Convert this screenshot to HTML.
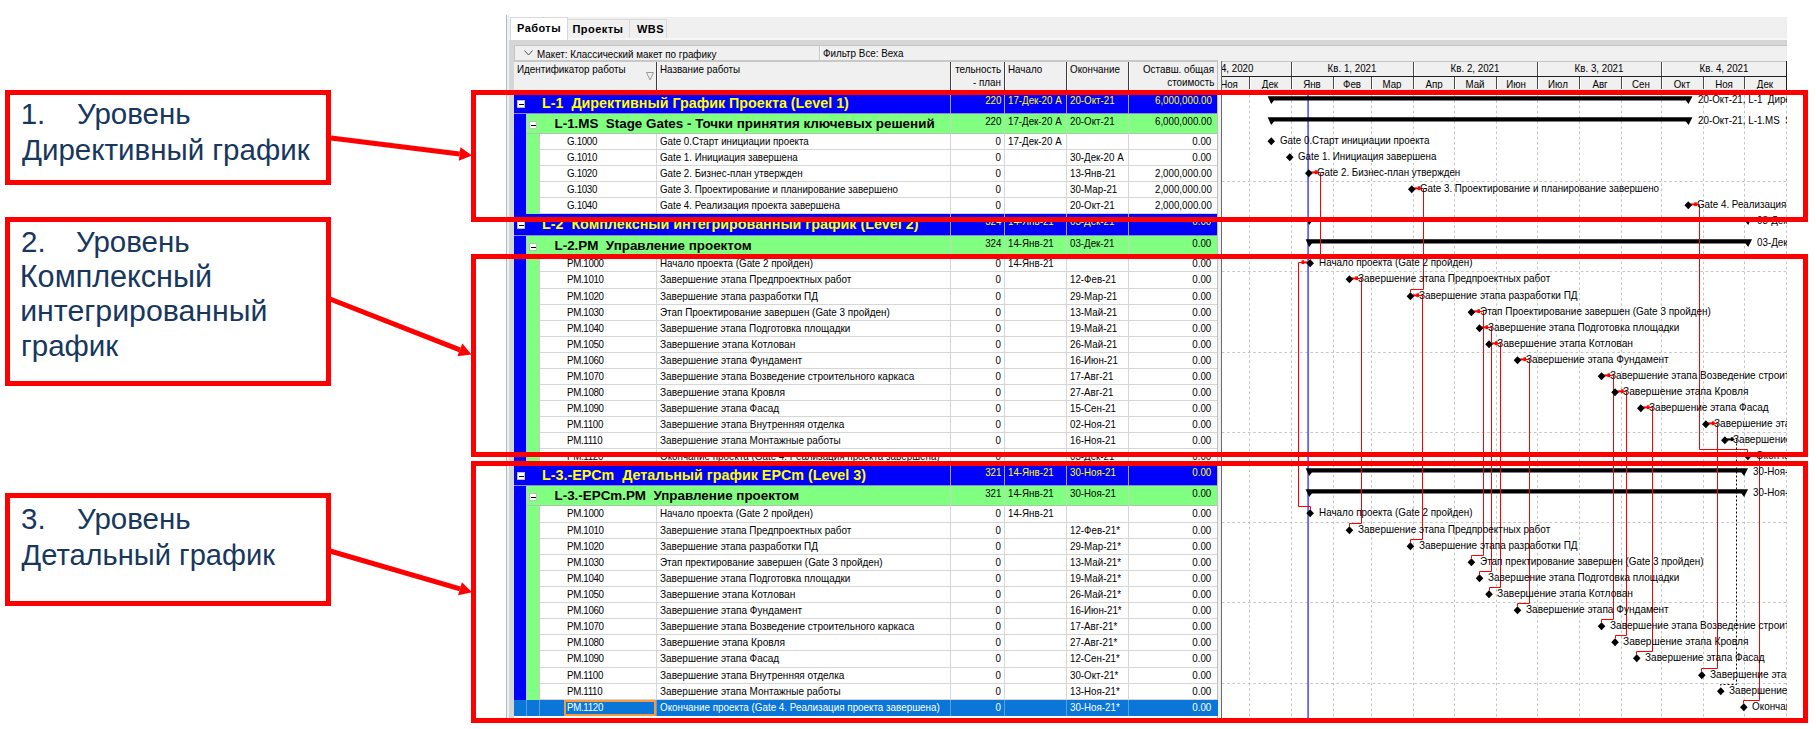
<!DOCTYPE html><html><head><meta charset="utf-8"><style>
html,body{margin:0;padding:0;}body{width:1816px;height:729px;position:relative;overflow:hidden;background:#fff;font-family:"Liberation Sans",sans-serif;}
div{box-sizing:border-box;}
</style></head><body>
<div style="position:absolute;left:506px;top:15px;width:1px;height:703px;background:#B9B9B9"></div>
<div style="position:absolute;left:507px;top:15px;width:2px;height:703px;background:#E9F3FC"></div>
<div style="position:absolute;left:509px;top:17px;width:1278px;height:701px;background:#F0F0F0"></div>
<div style="position:absolute;left:509px;top:38px;width:1278px;height:680px;background:#D6D6D6"></div>
<div style="position:absolute;left:509px;top:38px;width:1278px;height:2px;background:#F7F7F7"></div>
<div style="position:absolute;left:510px;top:17px;width:58px;height:23px;background:#fff;border:1px solid #D9D9D9;border-bottom:none"></div>
<div style="position:absolute;left:568px;top:19px;width:62px;height:19px;background:#F0F0F0;border:1px solid #D9D9D9;border-left:none;border-bottom:none"></div>
<div style="position:absolute;left:630px;top:19px;width:37px;height:19px;background:#F0F0F0;border:1px solid #D9D9D9;border-left:none;border-bottom:none"></div>
<div style="position:absolute;left:517px;top:21.55px;font-size:11.00px;line-height:12.65px;color:#000;font-weight:bold;white-space:pre;letter-spacing:0.45px">Работы</div>
<div style="position:absolute;left:572.5px;top:23.05px;font-size:11.00px;line-height:12.65px;color:#000;font-weight:bold;white-space:pre;letter-spacing:0.45px">Проекты</div>
<div style="position:absolute;left:637px;top:23.05px;font-size:11.00px;line-height:12.65px;color:#000;font-weight:bold;white-space:pre;letter-spacing:0.45px">WBS</div>
<div style="position:absolute;left:514px;top:45px;width:1273px;height:16px;background:#F0F0F0;border-top:1px solid #C4C4C4;border-left:1px solid #C4C4C4"></div>
<div style="position:absolute;left:819px;top:46px;width:1px;height:15px;background:#C8C8C8"></div>
<div style="position:absolute;left:820px;top:46px;width:1px;height:15px;background:#FFFFFF"></div>
<svg style="position:absolute;left:524px;top:50px" width="10" height="7"><path d="M0.5 0.5 L4.5 5 L8.5 0.5" fill="none" stroke="#505050" stroke-width="1"/></svg>
<div style="position:absolute;left:536.5px;top:47.67px;font-size:10.54px;line-height:12.12px;color:#000;font-weight:normal;white-space:pre;transform:scaleX(0.9350);transform-origin:0 0;">Макет: Классический макет по графику</div>
<div style="position:absolute;left:823px;top:47.47px;font-size:10.54px;line-height:12.12px;color:#000;font-weight:normal;white-space:pre;transform:scaleX(0.9350);transform-origin:0 0;">Фильтр Все: Веха</div>
<div style="position:absolute;left:514px;top:60px;width:704px;height:33px;background:#F0F0F0;border-top:2px solid #C8C8C8"></div>
<div style="position:absolute;left:656px;top:62px;width:1px;height:31px;background:#3C3C3C"></div>
<div style="position:absolute;left:657px;top:62px;width:1px;height:31px;background:#FFFFFF"></div>
<div style="position:absolute;left:950px;top:62px;width:1px;height:31px;background:#3C3C3C"></div>
<div style="position:absolute;left:951px;top:62px;width:1px;height:31px;background:#FFFFFF"></div>
<div style="position:absolute;left:1004px;top:62px;width:1px;height:31px;background:#3C3C3C"></div>
<div style="position:absolute;left:1005px;top:62px;width:1px;height:31px;background:#FFFFFF"></div>
<div style="position:absolute;left:1066px;top:62px;width:1px;height:31px;background:#3C3C3C"></div>
<div style="position:absolute;left:1067px;top:62px;width:1px;height:31px;background:#FFFFFF"></div>
<div style="position:absolute;left:1128px;top:62px;width:1px;height:31px;background:#3C3C3C"></div>
<div style="position:absolute;left:1129px;top:62px;width:1px;height:31px;background:#FFFFFF"></div>
<div style="position:absolute;left:1218px;top:62px;width:1px;height:31px;background:#3C3C3C"></div>
<div style="position:absolute;left:1219px;top:62px;width:1px;height:31px;background:#FFFFFF"></div>
<div style="position:absolute;left:517px;top:63.47px;font-size:10.54px;line-height:12.12px;color:#000;font-weight:normal;white-space:pre;transform:scaleX(0.9350);transform-origin:0 0;">Идентификатор работы</div>
<svg style="position:absolute;left:646px;top:72px" width="9" height="9"><path d="M0.5 0.5 L7.5 0.5 L4 8 Z" fill="none" stroke="#9A9A9A" stroke-width="1"/></svg>
<div style="position:absolute;left:660px;top:63.47px;font-size:10.54px;line-height:12.12px;color:#000;font-weight:normal;white-space:pre;transform:scaleX(0.9350);transform-origin:0 0;">Название работы</div>
<div style="position:absolute;right:815px;top:63.27px;font-size:10.54px;line-height:12.12px;color:#000;font-weight:normal;white-space:pre;transform:scaleX(0.9350);transform-origin:100% 0;">тельность</div>
<div style="position:absolute;right:815px;top:75.87px;font-size:10.54px;line-height:12.12px;color:#000;font-weight:normal;white-space:pre;transform:scaleX(0.9350);transform-origin:100% 0;">- план</div>
<div style="position:absolute;left:1008px;top:63.27px;font-size:10.54px;line-height:12.12px;color:#000;font-weight:normal;white-space:pre;transform:scaleX(0.9350);transform-origin:0 0;">Начало</div>
<div style="position:absolute;left:1069.5px;top:63.27px;font-size:10.54px;line-height:12.12px;color:#000;font-weight:normal;white-space:pre;transform:scaleX(0.9350);transform-origin:0 0;">Окончание</div>
<div style="position:absolute;right:602px;top:62.77px;font-size:10.54px;line-height:12.12px;color:#000;font-weight:normal;white-space:pre;transform:scaleX(0.9350);transform-origin:100% 0;">Оставш. общая</div>
<div style="position:absolute;right:602px;top:75.87px;font-size:10.54px;line-height:12.12px;color:#000;font-weight:normal;white-space:pre;transform:scaleX(0.9350);transform-origin:100% 0;">стоимость</div>
<div style="position:absolute;left:514px;top:93px;width:704px;height:625px;background:#FFFFFF"></div>
<div style="position:absolute;left:514px;top:93px;width:12px;height:121px;background:#0000FF"></div>
<div style="position:absolute;left:526px;top:93px;width:1px;height:121px;background:#C8C8D8"></div>
<div style="position:absolute;left:514px;top:214px;width:12px;height:251px;background:#0000FF"></div>
<div style="position:absolute;left:526px;top:214px;width:1px;height:251px;background:#C8C8D8"></div>
<div style="position:absolute;left:514px;top:465px;width:12px;height:251px;background:#0000FF"></div>
<div style="position:absolute;left:526px;top:465px;width:1px;height:251px;background:#C8C8D8"></div>
<div style="position:absolute;left:514px;top:93px;width:704px;height:21px;background:#0000FF"></div>
<div style="position:absolute;left:514px;top:113px;width:704px;height:1px;background:#8C8CC8"></div>
<div style="position:absolute;left:950px;top:93px;width:1px;height:21px;background:#A0A0E8"></div>
<div style="position:absolute;left:1004px;top:93px;width:1px;height:21px;background:#A0A0E8"></div>
<div style="position:absolute;left:1066px;top:93px;width:1px;height:21px;background:#A0A0E8"></div>
<div style="position:absolute;left:1128px;top:93px;width:1px;height:21px;background:#A0A0E8"></div>
<div style="position:absolute;left:517px;top:100px;width:8px;height:8px;background:#fff;border:1px solid #C0C0C0"><div style="position:absolute;left:1px;top:3px;width:5px;height:1px;background:#000"></div></div>
<div style="position:absolute;left:542px;top:94.76px;font-size:14.30px;line-height:16.45px;color:#FFFF00;font-weight:bold;white-space:pre;">L-1  Директивный График Проекта (Level 1)</div>
<div style="position:absolute;right:815px;top:95.16px;font-size:10.43px;line-height:11.99px;color:#FFFF00;font-weight:normal;white-space:pre;transform:scaleX(0.9350);transform-origin:100% 0;">220</div>
<div style="position:absolute;left:1008px;top:95.16px;font-size:10.43px;line-height:11.99px;color:#FFFF00;font-weight:normal;white-space:pre;transform:scaleX(0.9350);transform-origin:0 0;">17-Дек-20 A</div>
<div style="position:absolute;left:1069.5px;top:95.16px;font-size:10.43px;line-height:11.99px;color:#FFFF00;font-weight:normal;white-space:pre;transform:scaleX(0.9350);transform-origin:0 0;">20-Окт-21</div>
<div style="position:absolute;right:604.5px;top:95.16px;font-size:10.43px;line-height:11.99px;color:#FFFF00;font-weight:normal;white-space:pre;transform:scaleX(0.9350);transform-origin:100% 0;">6,000,000.00</div>
<div style="position:absolute;left:527px;top:114px;width:691px;height:20px;background:#80FF80"></div>
<div style="position:absolute;left:527px;top:133px;width:691px;height:1px;background:#A8C8A8"></div>
<div style="position:absolute;left:950px;top:114px;width:1px;height:20px;background:#C0D8C0"></div>
<div style="position:absolute;left:1004px;top:114px;width:1px;height:20px;background:#C0D8C0"></div>
<div style="position:absolute;left:1066px;top:114px;width:1px;height:20px;background:#C0D8C0"></div>
<div style="position:absolute;left:1128px;top:114px;width:1px;height:20px;background:#C0D8C0"></div>
<div style="position:absolute;left:529px;top:121px;width:8px;height:8px;background:#fff;border:1px solid #C0C0C0"><div style="position:absolute;left:1px;top:3px;width:5px;height:1px;background:#000"></div></div>
<div style="position:absolute;left:554.5px;top:116.07px;font-size:13.40px;line-height:15.41px;color:#000;font-weight:bold;white-space:pre;">L-1.MS  Stage Gates - Точки принятия ключевых решений</div>
<div style="position:absolute;right:815px;top:115.56px;font-size:10.43px;line-height:11.99px;color:#000;font-weight:normal;white-space:pre;transform:scaleX(0.9350);transform-origin:100% 0;">220</div>
<div style="position:absolute;left:1008px;top:115.56px;font-size:10.43px;line-height:11.99px;color:#000;font-weight:normal;white-space:pre;transform:scaleX(0.9350);transform-origin:0 0;">17-Дек-20 A</div>
<div style="position:absolute;left:1069.5px;top:115.56px;font-size:10.43px;line-height:11.99px;color:#000;font-weight:normal;white-space:pre;transform:scaleX(0.9350);transform-origin:0 0;">20-Окт-21</div>
<div style="position:absolute;right:604.5px;top:115.56px;font-size:10.43px;line-height:11.99px;color:#000;font-weight:normal;white-space:pre;transform:scaleX(0.9350);transform-origin:100% 0;">6,000,000.00</div>
<div style="position:absolute;left:527px;top:134px;width:12px;height:16px;background:#80FF80"></div>
<div style="position:absolute;left:539px;top:134px;width:1px;height:16px;background:#C8C8C8"></div>
<div style="position:absolute;left:540px;top:149px;width:678px;height:1px;background:#D6D6D6"></div>
<div style="position:absolute;left:656px;top:134px;width:1px;height:16px;background:#D6D6D6"></div>
<div style="position:absolute;left:950px;top:134px;width:1px;height:16px;background:#D6D6D6"></div>
<div style="position:absolute;left:1004px;top:134px;width:1px;height:16px;background:#D6D6D6"></div>
<div style="position:absolute;left:1066px;top:134px;width:1px;height:16px;background:#D6D6D6"></div>
<div style="position:absolute;left:1128px;top:134px;width:1px;height:16px;background:#D6D6D6"></div>
<div style="position:absolute;left:567px;top:135.56px;font-size:10.43px;line-height:11.99px;color:#000;font-weight:normal;white-space:pre;transform:scaleX(0.9350);transform-origin:0 0;letter-spacing:-0.35px">G.1000</div>
<div style="position:absolute;left:660px;top:135.56px;font-size:10.43px;line-height:11.99px;color:#000;font-weight:normal;white-space:pre;transform:scaleX(0.9350);transform-origin:0 0;">Gate 0.Старт инициации проекта</div>
<div style="position:absolute;right:815px;top:135.56px;font-size:10.43px;line-height:11.99px;color:#000;font-weight:normal;white-space:pre;transform:scaleX(0.9350);transform-origin:100% 0;">0</div>
<div style="position:absolute;left:1008px;top:135.56px;font-size:10.43px;line-height:11.99px;color:#000;font-weight:normal;white-space:pre;transform:scaleX(0.9350);transform-origin:0 0;">17-Дек-20 A</div>
<div style="position:absolute;right:604.5px;top:135.56px;font-size:10.43px;line-height:11.99px;color:#000;font-weight:normal;white-space:pre;transform:scaleX(0.9350);transform-origin:100% 0;">0.00</div>
<div style="position:absolute;left:527px;top:150px;width:12px;height:16px;background:#80FF80"></div>
<div style="position:absolute;left:539px;top:150px;width:1px;height:16px;background:#C8C8C8"></div>
<div style="position:absolute;left:540px;top:165px;width:678px;height:1px;background:#D6D6D6"></div>
<div style="position:absolute;left:656px;top:150px;width:1px;height:16px;background:#D6D6D6"></div>
<div style="position:absolute;left:950px;top:150px;width:1px;height:16px;background:#D6D6D6"></div>
<div style="position:absolute;left:1004px;top:150px;width:1px;height:16px;background:#D6D6D6"></div>
<div style="position:absolute;left:1066px;top:150px;width:1px;height:16px;background:#D6D6D6"></div>
<div style="position:absolute;left:1128px;top:150px;width:1px;height:16px;background:#D6D6D6"></div>
<div style="position:absolute;left:567px;top:151.56px;font-size:10.43px;line-height:11.99px;color:#000;font-weight:normal;white-space:pre;transform:scaleX(0.9350);transform-origin:0 0;letter-spacing:-0.35px">G.1010</div>
<div style="position:absolute;left:660px;top:151.56px;font-size:10.43px;line-height:11.99px;color:#000;font-weight:normal;white-space:pre;transform:scaleX(0.9350);transform-origin:0 0;">Gate 1. Инициация завершена</div>
<div style="position:absolute;right:815px;top:151.56px;font-size:10.43px;line-height:11.99px;color:#000;font-weight:normal;white-space:pre;transform:scaleX(0.9350);transform-origin:100% 0;">0</div>
<div style="position:absolute;left:1069.5px;top:151.56px;font-size:10.43px;line-height:11.99px;color:#000;font-weight:normal;white-space:pre;transform:scaleX(0.9350);transform-origin:0 0;">30-Дек-20 A</div>
<div style="position:absolute;right:604.5px;top:151.56px;font-size:10.43px;line-height:11.99px;color:#000;font-weight:normal;white-space:pre;transform:scaleX(0.9350);transform-origin:100% 0;">0.00</div>
<div style="position:absolute;left:527px;top:166px;width:12px;height:16px;background:#80FF80"></div>
<div style="position:absolute;left:539px;top:166px;width:1px;height:16px;background:#C8C8C8"></div>
<div style="position:absolute;left:540px;top:181px;width:678px;height:1px;background:#D6D6D6"></div>
<div style="position:absolute;left:656px;top:166px;width:1px;height:16px;background:#D6D6D6"></div>
<div style="position:absolute;left:950px;top:166px;width:1px;height:16px;background:#D6D6D6"></div>
<div style="position:absolute;left:1004px;top:166px;width:1px;height:16px;background:#D6D6D6"></div>
<div style="position:absolute;left:1066px;top:166px;width:1px;height:16px;background:#D6D6D6"></div>
<div style="position:absolute;left:1128px;top:166px;width:1px;height:16px;background:#D6D6D6"></div>
<div style="position:absolute;left:567px;top:167.56px;font-size:10.43px;line-height:11.99px;color:#000;font-weight:normal;white-space:pre;transform:scaleX(0.9350);transform-origin:0 0;letter-spacing:-0.35px">G.1020</div>
<div style="position:absolute;left:660px;top:167.56px;font-size:10.43px;line-height:11.99px;color:#000;font-weight:normal;white-space:pre;transform:scaleX(0.9350);transform-origin:0 0;">Gate 2. Бизнес-план утвержден</div>
<div style="position:absolute;right:815px;top:167.56px;font-size:10.43px;line-height:11.99px;color:#000;font-weight:normal;white-space:pre;transform:scaleX(0.9350);transform-origin:100% 0;">0</div>
<div style="position:absolute;left:1069.5px;top:167.56px;font-size:10.43px;line-height:11.99px;color:#000;font-weight:normal;white-space:pre;transform:scaleX(0.9350);transform-origin:0 0;">13-Янв-21</div>
<div style="position:absolute;right:604.5px;top:167.56px;font-size:10.43px;line-height:11.99px;color:#000;font-weight:normal;white-space:pre;transform:scaleX(0.9350);transform-origin:100% 0;">2,000,000.00</div>
<div style="position:absolute;left:527px;top:182px;width:12px;height:16px;background:#80FF80"></div>
<div style="position:absolute;left:539px;top:182px;width:1px;height:16px;background:#C8C8C8"></div>
<div style="position:absolute;left:540px;top:197px;width:678px;height:1px;background:#D6D6D6"></div>
<div style="position:absolute;left:656px;top:182px;width:1px;height:16px;background:#D6D6D6"></div>
<div style="position:absolute;left:950px;top:182px;width:1px;height:16px;background:#D6D6D6"></div>
<div style="position:absolute;left:1004px;top:182px;width:1px;height:16px;background:#D6D6D6"></div>
<div style="position:absolute;left:1066px;top:182px;width:1px;height:16px;background:#D6D6D6"></div>
<div style="position:absolute;left:1128px;top:182px;width:1px;height:16px;background:#D6D6D6"></div>
<div style="position:absolute;left:567px;top:183.56px;font-size:10.43px;line-height:11.99px;color:#000;font-weight:normal;white-space:pre;transform:scaleX(0.9350);transform-origin:0 0;letter-spacing:-0.35px">G.1030</div>
<div style="position:absolute;left:660px;top:183.56px;font-size:10.43px;line-height:11.99px;color:#000;font-weight:normal;white-space:pre;transform:scaleX(0.9350);transform-origin:0 0;">Gate 3. Проектирование и планирование завершено</div>
<div style="position:absolute;right:815px;top:183.56px;font-size:10.43px;line-height:11.99px;color:#000;font-weight:normal;white-space:pre;transform:scaleX(0.9350);transform-origin:100% 0;">0</div>
<div style="position:absolute;left:1069.5px;top:183.56px;font-size:10.43px;line-height:11.99px;color:#000;font-weight:normal;white-space:pre;transform:scaleX(0.9350);transform-origin:0 0;">30-Мар-21</div>
<div style="position:absolute;right:604.5px;top:183.56px;font-size:10.43px;line-height:11.99px;color:#000;font-weight:normal;white-space:pre;transform:scaleX(0.9350);transform-origin:100% 0;">2,000,000.00</div>
<div style="position:absolute;left:527px;top:198px;width:12px;height:16px;background:#80FF80"></div>
<div style="position:absolute;left:539px;top:198px;width:1px;height:16px;background:#C8C8C8"></div>
<div style="position:absolute;left:540px;top:213px;width:678px;height:1px;background:#D6D6D6"></div>
<div style="position:absolute;left:656px;top:198px;width:1px;height:16px;background:#D6D6D6"></div>
<div style="position:absolute;left:950px;top:198px;width:1px;height:16px;background:#D6D6D6"></div>
<div style="position:absolute;left:1004px;top:198px;width:1px;height:16px;background:#D6D6D6"></div>
<div style="position:absolute;left:1066px;top:198px;width:1px;height:16px;background:#D6D6D6"></div>
<div style="position:absolute;left:1128px;top:198px;width:1px;height:16px;background:#D6D6D6"></div>
<div style="position:absolute;left:567px;top:199.56px;font-size:10.43px;line-height:11.99px;color:#000;font-weight:normal;white-space:pre;transform:scaleX(0.9350);transform-origin:0 0;letter-spacing:-0.35px">G.1040</div>
<div style="position:absolute;left:660px;top:199.56px;font-size:10.43px;line-height:11.99px;color:#000;font-weight:normal;white-space:pre;transform:scaleX(0.9350);transform-origin:0 0;">Gate 4. Реализация проекта завершена</div>
<div style="position:absolute;right:815px;top:199.56px;font-size:10.43px;line-height:11.99px;color:#000;font-weight:normal;white-space:pre;transform:scaleX(0.9350);transform-origin:100% 0;">0</div>
<div style="position:absolute;left:1069.5px;top:199.56px;font-size:10.43px;line-height:11.99px;color:#000;font-weight:normal;white-space:pre;transform:scaleX(0.9350);transform-origin:0 0;">20-Окт-21</div>
<div style="position:absolute;right:604.5px;top:199.56px;font-size:10.43px;line-height:11.99px;color:#000;font-weight:normal;white-space:pre;transform:scaleX(0.9350);transform-origin:100% 0;">2,000,000.00</div>
<div style="position:absolute;left:514px;top:214px;width:704px;height:22px;background:#0000FF"></div>
<div style="position:absolute;left:514px;top:235px;width:704px;height:1px;background:#8C8CC8"></div>
<div style="position:absolute;left:950px;top:214px;width:1px;height:22px;background:#A0A0E8"></div>
<div style="position:absolute;left:1004px;top:214px;width:1px;height:22px;background:#A0A0E8"></div>
<div style="position:absolute;left:1066px;top:214px;width:1px;height:22px;background:#A0A0E8"></div>
<div style="position:absolute;left:1128px;top:214px;width:1px;height:22px;background:#A0A0E8"></div>
<div style="position:absolute;left:517px;top:221px;width:8px;height:8px;background:#fff;border:1px solid #C0C0C0"><div style="position:absolute;left:1px;top:3px;width:5px;height:1px;background:#000"></div></div>
<div style="position:absolute;left:542px;top:215.76px;font-size:14.30px;line-height:16.45px;color:#FFFF00;font-weight:bold;white-space:pre;">L-2  Комплексный интегрированный график (Level 2)</div>
<div style="position:absolute;right:815px;top:216.16px;font-size:10.43px;line-height:11.99px;color:#FFFF00;font-weight:normal;white-space:pre;transform:scaleX(0.9350);transform-origin:100% 0;">324</div>
<div style="position:absolute;left:1008px;top:216.16px;font-size:10.43px;line-height:11.99px;color:#FFFF00;font-weight:normal;white-space:pre;transform:scaleX(0.9350);transform-origin:0 0;">14-Янв-21</div>
<div style="position:absolute;left:1069.5px;top:216.16px;font-size:10.43px;line-height:11.99px;color:#FFFF00;font-weight:normal;white-space:pre;transform:scaleX(0.9350);transform-origin:0 0;">03-Дек-21</div>
<div style="position:absolute;right:604.5px;top:216.16px;font-size:10.43px;line-height:11.99px;color:#FFFF00;font-weight:normal;white-space:pre;transform:scaleX(0.9350);transform-origin:100% 0;">0.00</div>
<div style="position:absolute;left:527px;top:236px;width:691px;height:20px;background:#80FF80"></div>
<div style="position:absolute;left:527px;top:255px;width:691px;height:1px;background:#A8C8A8"></div>
<div style="position:absolute;left:950px;top:236px;width:1px;height:20px;background:#C0D8C0"></div>
<div style="position:absolute;left:1004px;top:236px;width:1px;height:20px;background:#C0D8C0"></div>
<div style="position:absolute;left:1066px;top:236px;width:1px;height:20px;background:#C0D8C0"></div>
<div style="position:absolute;left:1128px;top:236px;width:1px;height:20px;background:#C0D8C0"></div>
<div style="position:absolute;left:529px;top:243px;width:8px;height:8px;background:#fff;border:1px solid #C0C0C0"><div style="position:absolute;left:1px;top:3px;width:5px;height:1px;background:#000"></div></div>
<div style="position:absolute;left:554.5px;top:238.07px;font-size:13.40px;line-height:15.41px;color:#000;font-weight:bold;white-space:pre;">L-2.PM  Управление проектом</div>
<div style="position:absolute;right:815px;top:237.56px;font-size:10.43px;line-height:11.99px;color:#000;font-weight:normal;white-space:pre;transform:scaleX(0.9350);transform-origin:100% 0;">324</div>
<div style="position:absolute;left:1008px;top:237.56px;font-size:10.43px;line-height:11.99px;color:#000;font-weight:normal;white-space:pre;transform:scaleX(0.9350);transform-origin:0 0;">14-Янв-21</div>
<div style="position:absolute;left:1069.5px;top:237.56px;font-size:10.43px;line-height:11.99px;color:#000;font-weight:normal;white-space:pre;transform:scaleX(0.9350);transform-origin:0 0;">03-Дек-21</div>
<div style="position:absolute;right:604.5px;top:237.56px;font-size:10.43px;line-height:11.99px;color:#000;font-weight:normal;white-space:pre;transform:scaleX(0.9350);transform-origin:100% 0;">0.00</div>
<div style="position:absolute;left:527px;top:256px;width:12px;height:16px;background:#80FF80"></div>
<div style="position:absolute;left:539px;top:256px;width:1px;height:16px;background:#C8C8C8"></div>
<div style="position:absolute;left:540px;top:271px;width:678px;height:1px;background:#D6D6D6"></div>
<div style="position:absolute;left:656px;top:256px;width:1px;height:16px;background:#D6D6D6"></div>
<div style="position:absolute;left:950px;top:256px;width:1px;height:16px;background:#D6D6D6"></div>
<div style="position:absolute;left:1004px;top:256px;width:1px;height:16px;background:#D6D6D6"></div>
<div style="position:absolute;left:1066px;top:256px;width:1px;height:16px;background:#D6D6D6"></div>
<div style="position:absolute;left:1128px;top:256px;width:1px;height:16px;background:#D6D6D6"></div>
<div style="position:absolute;left:567px;top:257.56px;font-size:10.43px;line-height:11.99px;color:#000;font-weight:normal;white-space:pre;transform:scaleX(0.9350);transform-origin:0 0;letter-spacing:-0.35px">PM.1000</div>
<div style="position:absolute;left:660px;top:257.56px;font-size:10.43px;line-height:11.99px;color:#000;font-weight:normal;white-space:pre;transform:scaleX(0.9434);transform-origin:0 0;">Начало проекта (Gate 2 пройден)</div>
<div style="position:absolute;right:815px;top:257.56px;font-size:10.43px;line-height:11.99px;color:#000;font-weight:normal;white-space:pre;transform:scaleX(0.9350);transform-origin:100% 0;">0</div>
<div style="position:absolute;left:1008px;top:257.56px;font-size:10.43px;line-height:11.99px;color:#000;font-weight:normal;white-space:pre;transform:scaleX(0.9350);transform-origin:0 0;">14-Янв-21</div>
<div style="position:absolute;right:604.5px;top:257.56px;font-size:10.43px;line-height:11.99px;color:#000;font-weight:normal;white-space:pre;transform:scaleX(0.9350);transform-origin:100% 0;">0.00</div>
<div style="position:absolute;left:527px;top:272px;width:12px;height:17px;background:#80FF80"></div>
<div style="position:absolute;left:539px;top:272px;width:1px;height:17px;background:#C8C8C8"></div>
<div style="position:absolute;left:540px;top:288px;width:678px;height:1px;background:#D6D6D6"></div>
<div style="position:absolute;left:656px;top:272px;width:1px;height:17px;background:#D6D6D6"></div>
<div style="position:absolute;left:950px;top:272px;width:1px;height:17px;background:#D6D6D6"></div>
<div style="position:absolute;left:1004px;top:272px;width:1px;height:17px;background:#D6D6D6"></div>
<div style="position:absolute;left:1066px;top:272px;width:1px;height:17px;background:#D6D6D6"></div>
<div style="position:absolute;left:1128px;top:272px;width:1px;height:17px;background:#D6D6D6"></div>
<div style="position:absolute;left:567px;top:273.56px;font-size:10.43px;line-height:11.99px;color:#000;font-weight:normal;white-space:pre;transform:scaleX(0.9350);transform-origin:0 0;letter-spacing:-0.35px">PM.1010</div>
<div style="position:absolute;left:660px;top:273.56px;font-size:10.43px;line-height:11.99px;color:#000;font-weight:normal;white-space:pre;transform:scaleX(0.9565);transform-origin:0 0;">Завершение этапа Предпроектных работ</div>
<div style="position:absolute;right:815px;top:273.56px;font-size:10.43px;line-height:11.99px;color:#000;font-weight:normal;white-space:pre;transform:scaleX(0.9350);transform-origin:100% 0;">0</div>
<div style="position:absolute;left:1069.5px;top:273.56px;font-size:10.43px;line-height:11.99px;color:#000;font-weight:normal;white-space:pre;transform:scaleX(0.9350);transform-origin:0 0;">12-Фев-21</div>
<div style="position:absolute;right:604.5px;top:273.56px;font-size:10.43px;line-height:11.99px;color:#000;font-weight:normal;white-space:pre;transform:scaleX(0.9350);transform-origin:100% 0;">0.00</div>
<div style="position:absolute;left:527px;top:289px;width:12px;height:16px;background:#80FF80"></div>
<div style="position:absolute;left:539px;top:289px;width:1px;height:16px;background:#C8C8C8"></div>
<div style="position:absolute;left:540px;top:304px;width:678px;height:1px;background:#D6D6D6"></div>
<div style="position:absolute;left:656px;top:289px;width:1px;height:16px;background:#D6D6D6"></div>
<div style="position:absolute;left:950px;top:289px;width:1px;height:16px;background:#D6D6D6"></div>
<div style="position:absolute;left:1004px;top:289px;width:1px;height:16px;background:#D6D6D6"></div>
<div style="position:absolute;left:1066px;top:289px;width:1px;height:16px;background:#D6D6D6"></div>
<div style="position:absolute;left:1128px;top:289px;width:1px;height:16px;background:#D6D6D6"></div>
<div style="position:absolute;left:567px;top:290.56px;font-size:10.43px;line-height:11.99px;color:#000;font-weight:normal;white-space:pre;transform:scaleX(0.9350);transform-origin:0 0;letter-spacing:-0.35px">PM.1020</div>
<div style="position:absolute;left:660px;top:290.56px;font-size:10.43px;line-height:11.99px;color:#000;font-weight:normal;white-space:pre;transform:scaleX(0.9546);transform-origin:0 0;">Завершение этапа разработки ПД</div>
<div style="position:absolute;right:815px;top:290.56px;font-size:10.43px;line-height:11.99px;color:#000;font-weight:normal;white-space:pre;transform:scaleX(0.9350);transform-origin:100% 0;">0</div>
<div style="position:absolute;left:1069.5px;top:290.56px;font-size:10.43px;line-height:11.99px;color:#000;font-weight:normal;white-space:pre;transform:scaleX(0.9350);transform-origin:0 0;">29-Мар-21</div>
<div style="position:absolute;right:604.5px;top:290.56px;font-size:10.43px;line-height:11.99px;color:#000;font-weight:normal;white-space:pre;transform:scaleX(0.9350);transform-origin:100% 0;">0.00</div>
<div style="position:absolute;left:527px;top:305px;width:12px;height:16px;background:#80FF80"></div>
<div style="position:absolute;left:539px;top:305px;width:1px;height:16px;background:#C8C8C8"></div>
<div style="position:absolute;left:540px;top:320px;width:678px;height:1px;background:#D6D6D6"></div>
<div style="position:absolute;left:656px;top:305px;width:1px;height:16px;background:#D6D6D6"></div>
<div style="position:absolute;left:950px;top:305px;width:1px;height:16px;background:#D6D6D6"></div>
<div style="position:absolute;left:1004px;top:305px;width:1px;height:16px;background:#D6D6D6"></div>
<div style="position:absolute;left:1066px;top:305px;width:1px;height:16px;background:#D6D6D6"></div>
<div style="position:absolute;left:1128px;top:305px;width:1px;height:16px;background:#D6D6D6"></div>
<div style="position:absolute;left:567px;top:306.56px;font-size:10.43px;line-height:11.99px;color:#000;font-weight:normal;white-space:pre;transform:scaleX(0.9350);transform-origin:0 0;letter-spacing:-0.35px">PM.1030</div>
<div style="position:absolute;left:660px;top:306.56px;font-size:10.43px;line-height:11.99px;color:#000;font-weight:normal;white-space:pre;transform:scaleX(0.9500);transform-origin:0 0;">Этап Проектирование завершен (Gate 3 пройден)</div>
<div style="position:absolute;right:815px;top:306.56px;font-size:10.43px;line-height:11.99px;color:#000;font-weight:normal;white-space:pre;transform:scaleX(0.9350);transform-origin:100% 0;">0</div>
<div style="position:absolute;left:1069.5px;top:306.56px;font-size:10.43px;line-height:11.99px;color:#000;font-weight:normal;white-space:pre;transform:scaleX(0.9350);transform-origin:0 0;">13-Май-21</div>
<div style="position:absolute;right:604.5px;top:306.56px;font-size:10.43px;line-height:11.99px;color:#000;font-weight:normal;white-space:pre;transform:scaleX(0.9350);transform-origin:100% 0;">0.00</div>
<div style="position:absolute;left:527px;top:321px;width:12px;height:16px;background:#80FF80"></div>
<div style="position:absolute;left:539px;top:321px;width:1px;height:16px;background:#C8C8C8"></div>
<div style="position:absolute;left:540px;top:336px;width:678px;height:1px;background:#D6D6D6"></div>
<div style="position:absolute;left:656px;top:321px;width:1px;height:16px;background:#D6D6D6"></div>
<div style="position:absolute;left:950px;top:321px;width:1px;height:16px;background:#D6D6D6"></div>
<div style="position:absolute;left:1004px;top:321px;width:1px;height:16px;background:#D6D6D6"></div>
<div style="position:absolute;left:1066px;top:321px;width:1px;height:16px;background:#D6D6D6"></div>
<div style="position:absolute;left:1128px;top:321px;width:1px;height:16px;background:#D6D6D6"></div>
<div style="position:absolute;left:567px;top:322.56px;font-size:10.43px;line-height:11.99px;color:#000;font-weight:normal;white-space:pre;transform:scaleX(0.9350);transform-origin:0 0;letter-spacing:-0.35px">PM.1040</div>
<div style="position:absolute;left:660px;top:322.56px;font-size:10.43px;line-height:11.99px;color:#000;font-weight:normal;white-space:pre;transform:scaleX(0.9537);transform-origin:0 0;">Завершение этапа Подготовка площадки</div>
<div style="position:absolute;right:815px;top:322.56px;font-size:10.43px;line-height:11.99px;color:#000;font-weight:normal;white-space:pre;transform:scaleX(0.9350);transform-origin:100% 0;">0</div>
<div style="position:absolute;left:1069.5px;top:322.56px;font-size:10.43px;line-height:11.99px;color:#000;font-weight:normal;white-space:pre;transform:scaleX(0.9350);transform-origin:0 0;">19-Май-21</div>
<div style="position:absolute;right:604.5px;top:322.56px;font-size:10.43px;line-height:11.99px;color:#000;font-weight:normal;white-space:pre;transform:scaleX(0.9350);transform-origin:100% 0;">0.00</div>
<div style="position:absolute;left:527px;top:337px;width:12px;height:16px;background:#80FF80"></div>
<div style="position:absolute;left:539px;top:337px;width:1px;height:16px;background:#C8C8C8"></div>
<div style="position:absolute;left:540px;top:352px;width:678px;height:1px;background:#D6D6D6"></div>
<div style="position:absolute;left:656px;top:337px;width:1px;height:16px;background:#D6D6D6"></div>
<div style="position:absolute;left:950px;top:337px;width:1px;height:16px;background:#D6D6D6"></div>
<div style="position:absolute;left:1004px;top:337px;width:1px;height:16px;background:#D6D6D6"></div>
<div style="position:absolute;left:1066px;top:337px;width:1px;height:16px;background:#D6D6D6"></div>
<div style="position:absolute;left:1128px;top:337px;width:1px;height:16px;background:#D6D6D6"></div>
<div style="position:absolute;left:567px;top:338.56px;font-size:10.43px;line-height:11.99px;color:#000;font-weight:normal;white-space:pre;transform:scaleX(0.9350);transform-origin:0 0;letter-spacing:-0.35px">PM.1050</div>
<div style="position:absolute;left:660px;top:338.56px;font-size:10.43px;line-height:11.99px;color:#000;font-weight:normal;white-space:pre;transform:scaleX(0.9771);transform-origin:0 0;">Завершение этапа Котлован</div>
<div style="position:absolute;right:815px;top:338.56px;font-size:10.43px;line-height:11.99px;color:#000;font-weight:normal;white-space:pre;transform:scaleX(0.9350);transform-origin:100% 0;">0</div>
<div style="position:absolute;left:1069.5px;top:338.56px;font-size:10.43px;line-height:11.99px;color:#000;font-weight:normal;white-space:pre;transform:scaleX(0.9350);transform-origin:0 0;">26-Май-21</div>
<div style="position:absolute;right:604.5px;top:338.56px;font-size:10.43px;line-height:11.99px;color:#000;font-weight:normal;white-space:pre;transform:scaleX(0.9350);transform-origin:100% 0;">0.00</div>
<div style="position:absolute;left:527px;top:353px;width:12px;height:16px;background:#80FF80"></div>
<div style="position:absolute;left:539px;top:353px;width:1px;height:16px;background:#C8C8C8"></div>
<div style="position:absolute;left:540px;top:368px;width:678px;height:1px;background:#D6D6D6"></div>
<div style="position:absolute;left:656px;top:353px;width:1px;height:16px;background:#D6D6D6"></div>
<div style="position:absolute;left:950px;top:353px;width:1px;height:16px;background:#D6D6D6"></div>
<div style="position:absolute;left:1004px;top:353px;width:1px;height:16px;background:#D6D6D6"></div>
<div style="position:absolute;left:1066px;top:353px;width:1px;height:16px;background:#D6D6D6"></div>
<div style="position:absolute;left:1128px;top:353px;width:1px;height:16px;background:#D6D6D6"></div>
<div style="position:absolute;left:567px;top:354.56px;font-size:10.43px;line-height:11.99px;color:#000;font-weight:normal;white-space:pre;transform:scaleX(0.9350);transform-origin:0 0;letter-spacing:-0.35px">PM.1060</div>
<div style="position:absolute;left:660px;top:354.56px;font-size:10.43px;line-height:11.99px;color:#000;font-weight:normal;white-space:pre;transform:scaleX(0.9621);transform-origin:0 0;">Завершение этапа Фундамент</div>
<div style="position:absolute;right:815px;top:354.56px;font-size:10.43px;line-height:11.99px;color:#000;font-weight:normal;white-space:pre;transform:scaleX(0.9350);transform-origin:100% 0;">0</div>
<div style="position:absolute;left:1069.5px;top:354.56px;font-size:10.43px;line-height:11.99px;color:#000;font-weight:normal;white-space:pre;transform:scaleX(0.9350);transform-origin:0 0;">16-Июн-21</div>
<div style="position:absolute;right:604.5px;top:354.56px;font-size:10.43px;line-height:11.99px;color:#000;font-weight:normal;white-space:pre;transform:scaleX(0.9350);transform-origin:100% 0;">0.00</div>
<div style="position:absolute;left:527px;top:369px;width:12px;height:16px;background:#80FF80"></div>
<div style="position:absolute;left:539px;top:369px;width:1px;height:16px;background:#C8C8C8"></div>
<div style="position:absolute;left:540px;top:384px;width:678px;height:1px;background:#D6D6D6"></div>
<div style="position:absolute;left:656px;top:369px;width:1px;height:16px;background:#D6D6D6"></div>
<div style="position:absolute;left:950px;top:369px;width:1px;height:16px;background:#D6D6D6"></div>
<div style="position:absolute;left:1004px;top:369px;width:1px;height:16px;background:#D6D6D6"></div>
<div style="position:absolute;left:1066px;top:369px;width:1px;height:16px;background:#D6D6D6"></div>
<div style="position:absolute;left:1128px;top:369px;width:1px;height:16px;background:#D6D6D6"></div>
<div style="position:absolute;left:567px;top:370.56px;font-size:10.43px;line-height:11.99px;color:#000;font-weight:normal;white-space:pre;transform:scaleX(0.9350);transform-origin:0 0;letter-spacing:-0.35px">PM.1070</div>
<div style="position:absolute;left:660px;top:370.56px;font-size:10.43px;line-height:11.99px;color:#000;font-weight:normal;white-space:pre;transform:scaleX(0.9602);transform-origin:0 0;">Завершение этапа Возведение строительного каркаса</div>
<div style="position:absolute;right:815px;top:370.56px;font-size:10.43px;line-height:11.99px;color:#000;font-weight:normal;white-space:pre;transform:scaleX(0.9350);transform-origin:100% 0;">0</div>
<div style="position:absolute;left:1069.5px;top:370.56px;font-size:10.43px;line-height:11.99px;color:#000;font-weight:normal;white-space:pre;transform:scaleX(0.9350);transform-origin:0 0;">17-Авг-21</div>
<div style="position:absolute;right:604.5px;top:370.56px;font-size:10.43px;line-height:11.99px;color:#000;font-weight:normal;white-space:pre;transform:scaleX(0.9350);transform-origin:100% 0;">0.00</div>
<div style="position:absolute;left:527px;top:385px;width:12px;height:16px;background:#80FF80"></div>
<div style="position:absolute;left:539px;top:385px;width:1px;height:16px;background:#C8C8C8"></div>
<div style="position:absolute;left:540px;top:400px;width:678px;height:1px;background:#D6D6D6"></div>
<div style="position:absolute;left:656px;top:385px;width:1px;height:16px;background:#D6D6D6"></div>
<div style="position:absolute;left:950px;top:385px;width:1px;height:16px;background:#D6D6D6"></div>
<div style="position:absolute;left:1004px;top:385px;width:1px;height:16px;background:#D6D6D6"></div>
<div style="position:absolute;left:1066px;top:385px;width:1px;height:16px;background:#D6D6D6"></div>
<div style="position:absolute;left:1128px;top:385px;width:1px;height:16px;background:#D6D6D6"></div>
<div style="position:absolute;left:567px;top:386.56px;font-size:10.43px;line-height:11.99px;color:#000;font-weight:normal;white-space:pre;transform:scaleX(0.9350);transform-origin:0 0;letter-spacing:-0.35px">PM.1080</div>
<div style="position:absolute;left:660px;top:386.56px;font-size:10.43px;line-height:11.99px;color:#000;font-weight:normal;white-space:pre;transform:scaleX(0.9752);transform-origin:0 0;">Завершение этапа Кровля</div>
<div style="position:absolute;right:815px;top:386.56px;font-size:10.43px;line-height:11.99px;color:#000;font-weight:normal;white-space:pre;transform:scaleX(0.9350);transform-origin:100% 0;">0</div>
<div style="position:absolute;left:1069.5px;top:386.56px;font-size:10.43px;line-height:11.99px;color:#000;font-weight:normal;white-space:pre;transform:scaleX(0.9350);transform-origin:0 0;">27-Авг-21</div>
<div style="position:absolute;right:604.5px;top:386.56px;font-size:10.43px;line-height:11.99px;color:#000;font-weight:normal;white-space:pre;transform:scaleX(0.9350);transform-origin:100% 0;">0.00</div>
<div style="position:absolute;left:527px;top:401px;width:12px;height:16px;background:#80FF80"></div>
<div style="position:absolute;left:539px;top:401px;width:1px;height:16px;background:#C8C8C8"></div>
<div style="position:absolute;left:540px;top:416px;width:678px;height:1px;background:#D6D6D6"></div>
<div style="position:absolute;left:656px;top:401px;width:1px;height:16px;background:#D6D6D6"></div>
<div style="position:absolute;left:950px;top:401px;width:1px;height:16px;background:#D6D6D6"></div>
<div style="position:absolute;left:1004px;top:401px;width:1px;height:16px;background:#D6D6D6"></div>
<div style="position:absolute;left:1066px;top:401px;width:1px;height:16px;background:#D6D6D6"></div>
<div style="position:absolute;left:1128px;top:401px;width:1px;height:16px;background:#D6D6D6"></div>
<div style="position:absolute;left:567px;top:402.56px;font-size:10.43px;line-height:11.99px;color:#000;font-weight:normal;white-space:pre;transform:scaleX(0.9350);transform-origin:0 0;letter-spacing:-0.35px">PM.1090</div>
<div style="position:absolute;left:660px;top:402.56px;font-size:10.43px;line-height:11.99px;color:#000;font-weight:normal;white-space:pre;transform:scaleX(0.9593);transform-origin:0 0;">Завершение этапа Фасад</div>
<div style="position:absolute;right:815px;top:402.56px;font-size:10.43px;line-height:11.99px;color:#000;font-weight:normal;white-space:pre;transform:scaleX(0.9350);transform-origin:100% 0;">0</div>
<div style="position:absolute;left:1069.5px;top:402.56px;font-size:10.43px;line-height:11.99px;color:#000;font-weight:normal;white-space:pre;transform:scaleX(0.9350);transform-origin:0 0;">15-Сен-21</div>
<div style="position:absolute;right:604.5px;top:402.56px;font-size:10.43px;line-height:11.99px;color:#000;font-weight:normal;white-space:pre;transform:scaleX(0.9350);transform-origin:100% 0;">0.00</div>
<div style="position:absolute;left:527px;top:417px;width:12px;height:16px;background:#80FF80"></div>
<div style="position:absolute;left:539px;top:417px;width:1px;height:16px;background:#C8C8C8"></div>
<div style="position:absolute;left:540px;top:432px;width:678px;height:1px;background:#D6D6D6"></div>
<div style="position:absolute;left:656px;top:417px;width:1px;height:16px;background:#D6D6D6"></div>
<div style="position:absolute;left:950px;top:417px;width:1px;height:16px;background:#D6D6D6"></div>
<div style="position:absolute;left:1004px;top:417px;width:1px;height:16px;background:#D6D6D6"></div>
<div style="position:absolute;left:1066px;top:417px;width:1px;height:16px;background:#D6D6D6"></div>
<div style="position:absolute;left:1128px;top:417px;width:1px;height:16px;background:#D6D6D6"></div>
<div style="position:absolute;left:567px;top:418.56px;font-size:10.43px;line-height:11.99px;color:#000;font-weight:normal;white-space:pre;transform:scaleX(0.9350);transform-origin:0 0;letter-spacing:-0.35px">PM.1100</div>
<div style="position:absolute;left:660px;top:418.56px;font-size:10.43px;line-height:11.99px;color:#000;font-weight:normal;white-space:pre;transform:scaleX(0.9621);transform-origin:0 0;">Завершение этапа Внутренняя отделка</div>
<div style="position:absolute;right:815px;top:418.56px;font-size:10.43px;line-height:11.99px;color:#000;font-weight:normal;white-space:pre;transform:scaleX(0.9350);transform-origin:100% 0;">0</div>
<div style="position:absolute;left:1069.5px;top:418.56px;font-size:10.43px;line-height:11.99px;color:#000;font-weight:normal;white-space:pre;transform:scaleX(0.9350);transform-origin:0 0;">02-Ноя-21</div>
<div style="position:absolute;right:604.5px;top:418.56px;font-size:10.43px;line-height:11.99px;color:#000;font-weight:normal;white-space:pre;transform:scaleX(0.9350);transform-origin:100% 0;">0.00</div>
<div style="position:absolute;left:527px;top:433px;width:12px;height:16px;background:#80FF80"></div>
<div style="position:absolute;left:539px;top:433px;width:1px;height:16px;background:#C8C8C8"></div>
<div style="position:absolute;left:540px;top:448px;width:678px;height:1px;background:#D6D6D6"></div>
<div style="position:absolute;left:656px;top:433px;width:1px;height:16px;background:#D6D6D6"></div>
<div style="position:absolute;left:950px;top:433px;width:1px;height:16px;background:#D6D6D6"></div>
<div style="position:absolute;left:1004px;top:433px;width:1px;height:16px;background:#D6D6D6"></div>
<div style="position:absolute;left:1066px;top:433px;width:1px;height:16px;background:#D6D6D6"></div>
<div style="position:absolute;left:1128px;top:433px;width:1px;height:16px;background:#D6D6D6"></div>
<div style="position:absolute;left:567px;top:434.56px;font-size:10.43px;line-height:11.99px;color:#000;font-weight:normal;white-space:pre;transform:scaleX(0.9350);transform-origin:0 0;letter-spacing:-0.35px">PM.1110</div>
<div style="position:absolute;left:660px;top:434.56px;font-size:10.43px;line-height:11.99px;color:#000;font-weight:normal;white-space:pre;transform:scaleX(0.9584);transform-origin:0 0;">Завершение этапа Монтажные работы</div>
<div style="position:absolute;right:815px;top:434.56px;font-size:10.43px;line-height:11.99px;color:#000;font-weight:normal;white-space:pre;transform:scaleX(0.9350);transform-origin:100% 0;">0</div>
<div style="position:absolute;left:1069.5px;top:434.56px;font-size:10.43px;line-height:11.99px;color:#000;font-weight:normal;white-space:pre;transform:scaleX(0.9350);transform-origin:0 0;">16-Ноя-21</div>
<div style="position:absolute;right:604.5px;top:434.56px;font-size:10.43px;line-height:11.99px;color:#000;font-weight:normal;white-space:pre;transform:scaleX(0.9350);transform-origin:100% 0;">0.00</div>
<div style="position:absolute;left:527px;top:449px;width:12px;height:16px;background:#80FF80"></div>
<div style="position:absolute;left:539px;top:449px;width:1px;height:16px;background:#C8C8C8"></div>
<div style="position:absolute;left:540px;top:464px;width:678px;height:1px;background:#D6D6D6"></div>
<div style="position:absolute;left:656px;top:449px;width:1px;height:16px;background:#D6D6D6"></div>
<div style="position:absolute;left:950px;top:449px;width:1px;height:16px;background:#D6D6D6"></div>
<div style="position:absolute;left:1004px;top:449px;width:1px;height:16px;background:#D6D6D6"></div>
<div style="position:absolute;left:1066px;top:449px;width:1px;height:16px;background:#D6D6D6"></div>
<div style="position:absolute;left:1128px;top:449px;width:1px;height:16px;background:#D6D6D6"></div>
<div style="position:absolute;left:567px;top:450.56px;font-size:10.43px;line-height:11.99px;color:#000;font-weight:normal;white-space:pre;transform:scaleX(0.9350);transform-origin:0 0;letter-spacing:-0.35px">PM.1120</div>
<div style="position:absolute;left:660px;top:450.56px;font-size:10.43px;line-height:11.99px;color:#000;font-weight:normal;white-space:pre;transform:scaleX(0.9444);transform-origin:0 0;">Окончание проекта (Gate 4. Реализация проекта завершена)</div>
<div style="position:absolute;right:815px;top:450.56px;font-size:10.43px;line-height:11.99px;color:#000;font-weight:normal;white-space:pre;transform:scaleX(0.9350);transform-origin:100% 0;">0</div>
<div style="position:absolute;left:1069.5px;top:450.56px;font-size:10.43px;line-height:11.99px;color:#000;font-weight:normal;white-space:pre;transform:scaleX(0.9350);transform-origin:0 0;">03-Дек-21</div>
<div style="position:absolute;right:604.5px;top:450.56px;font-size:10.43px;line-height:11.99px;color:#000;font-weight:normal;white-space:pre;transform:scaleX(0.9350);transform-origin:100% 0;">0.00</div>
<div style="position:absolute;left:514px;top:465px;width:704px;height:21px;background:#0000FF"></div>
<div style="position:absolute;left:514px;top:485px;width:704px;height:1px;background:#8C8CC8"></div>
<div style="position:absolute;left:950px;top:465px;width:1px;height:21px;background:#A0A0E8"></div>
<div style="position:absolute;left:1004px;top:465px;width:1px;height:21px;background:#A0A0E8"></div>
<div style="position:absolute;left:1066px;top:465px;width:1px;height:21px;background:#A0A0E8"></div>
<div style="position:absolute;left:1128px;top:465px;width:1px;height:21px;background:#A0A0E8"></div>
<div style="position:absolute;left:517px;top:472px;width:8px;height:8px;background:#fff;border:1px solid #C0C0C0"><div style="position:absolute;left:1px;top:3px;width:5px;height:1px;background:#000"></div></div>
<div style="position:absolute;left:542px;top:466.76px;font-size:14.30px;line-height:16.45px;color:#FFFF00;font-weight:bold;white-space:pre;">L-3.-EPCm  Детальный график EPCm (Level 3)</div>
<div style="position:absolute;right:815px;top:467.16px;font-size:10.43px;line-height:11.99px;color:#FFFF00;font-weight:normal;white-space:pre;transform:scaleX(0.9350);transform-origin:100% 0;">321</div>
<div style="position:absolute;left:1008px;top:467.16px;font-size:10.43px;line-height:11.99px;color:#FFFF00;font-weight:normal;white-space:pre;transform:scaleX(0.9350);transform-origin:0 0;">14-Янв-21</div>
<div style="position:absolute;left:1069.5px;top:467.16px;font-size:10.43px;line-height:11.99px;color:#FFFF00;font-weight:normal;white-space:pre;transform:scaleX(0.9350);transform-origin:0 0;">30-Ноя-21</div>
<div style="position:absolute;right:604.5px;top:467.16px;font-size:10.43px;line-height:11.99px;color:#FFFF00;font-weight:normal;white-space:pre;transform:scaleX(0.9350);transform-origin:100% 0;">0.00</div>
<div style="position:absolute;left:527px;top:486px;width:691px;height:20px;background:#80FF80"></div>
<div style="position:absolute;left:527px;top:505px;width:691px;height:1px;background:#A8C8A8"></div>
<div style="position:absolute;left:950px;top:486px;width:1px;height:20px;background:#C0D8C0"></div>
<div style="position:absolute;left:1004px;top:486px;width:1px;height:20px;background:#C0D8C0"></div>
<div style="position:absolute;left:1066px;top:486px;width:1px;height:20px;background:#C0D8C0"></div>
<div style="position:absolute;left:1128px;top:486px;width:1px;height:20px;background:#C0D8C0"></div>
<div style="position:absolute;left:529px;top:493px;width:8px;height:8px;background:#fff;border:1px solid #C0C0C0"><div style="position:absolute;left:1px;top:3px;width:5px;height:1px;background:#000"></div></div>
<div style="position:absolute;left:554.5px;top:488.07px;font-size:13.40px;line-height:15.41px;color:#000;font-weight:bold;white-space:pre;">L-3.-EPCm.PM  Управление проектом</div>
<div style="position:absolute;right:815px;top:487.56px;font-size:10.43px;line-height:11.99px;color:#000;font-weight:normal;white-space:pre;transform:scaleX(0.9350);transform-origin:100% 0;">321</div>
<div style="position:absolute;left:1008px;top:487.56px;font-size:10.43px;line-height:11.99px;color:#000;font-weight:normal;white-space:pre;transform:scaleX(0.9350);transform-origin:0 0;">14-Янв-21</div>
<div style="position:absolute;left:1069.5px;top:487.56px;font-size:10.43px;line-height:11.99px;color:#000;font-weight:normal;white-space:pre;transform:scaleX(0.9350);transform-origin:0 0;">30-Ноя-21</div>
<div style="position:absolute;right:604.5px;top:487.56px;font-size:10.43px;line-height:11.99px;color:#000;font-weight:normal;white-space:pre;transform:scaleX(0.9350);transform-origin:100% 0;">0.00</div>
<div style="position:absolute;left:527px;top:506px;width:12px;height:17px;background:#80FF80"></div>
<div style="position:absolute;left:539px;top:506px;width:1px;height:17px;background:#C8C8C8"></div>
<div style="position:absolute;left:540px;top:522px;width:678px;height:1px;background:#D6D6D6"></div>
<div style="position:absolute;left:656px;top:506px;width:1px;height:17px;background:#D6D6D6"></div>
<div style="position:absolute;left:950px;top:506px;width:1px;height:17px;background:#D6D6D6"></div>
<div style="position:absolute;left:1004px;top:506px;width:1px;height:17px;background:#D6D6D6"></div>
<div style="position:absolute;left:1066px;top:506px;width:1px;height:17px;background:#D6D6D6"></div>
<div style="position:absolute;left:1128px;top:506px;width:1px;height:17px;background:#D6D6D6"></div>
<div style="position:absolute;left:567px;top:507.56px;font-size:10.43px;line-height:11.99px;color:#000;font-weight:normal;white-space:pre;transform:scaleX(0.9350);transform-origin:0 0;letter-spacing:-0.35px">PM.1000</div>
<div style="position:absolute;left:660px;top:507.56px;font-size:10.43px;line-height:11.99px;color:#000;font-weight:normal;white-space:pre;transform:scaleX(0.9434);transform-origin:0 0;">Начало проекта (Gate 2 пройден)</div>
<div style="position:absolute;right:815px;top:507.56px;font-size:10.43px;line-height:11.99px;color:#000;font-weight:normal;white-space:pre;transform:scaleX(0.9350);transform-origin:100% 0;">0</div>
<div style="position:absolute;left:1008px;top:507.56px;font-size:10.43px;line-height:11.99px;color:#000;font-weight:normal;white-space:pre;transform:scaleX(0.9350);transform-origin:0 0;">14-Янв-21</div>
<div style="position:absolute;right:604.5px;top:507.56px;font-size:10.43px;line-height:11.99px;color:#000;font-weight:normal;white-space:pre;transform:scaleX(0.9350);transform-origin:100% 0;">0.00</div>
<div style="position:absolute;left:527px;top:523px;width:12px;height:16px;background:#80FF80"></div>
<div style="position:absolute;left:539px;top:523px;width:1px;height:16px;background:#C8C8C8"></div>
<div style="position:absolute;left:540px;top:538px;width:678px;height:1px;background:#D6D6D6"></div>
<div style="position:absolute;left:656px;top:523px;width:1px;height:16px;background:#D6D6D6"></div>
<div style="position:absolute;left:950px;top:523px;width:1px;height:16px;background:#D6D6D6"></div>
<div style="position:absolute;left:1004px;top:523px;width:1px;height:16px;background:#D6D6D6"></div>
<div style="position:absolute;left:1066px;top:523px;width:1px;height:16px;background:#D6D6D6"></div>
<div style="position:absolute;left:1128px;top:523px;width:1px;height:16px;background:#D6D6D6"></div>
<div style="position:absolute;left:567px;top:524.56px;font-size:10.43px;line-height:11.99px;color:#000;font-weight:normal;white-space:pre;transform:scaleX(0.9350);transform-origin:0 0;letter-spacing:-0.35px">PM.1010</div>
<div style="position:absolute;left:660px;top:524.56px;font-size:10.43px;line-height:11.99px;color:#000;font-weight:normal;white-space:pre;transform:scaleX(0.9565);transform-origin:0 0;">Завершение этапа Предпроектных работ</div>
<div style="position:absolute;right:815px;top:524.56px;font-size:10.43px;line-height:11.99px;color:#000;font-weight:normal;white-space:pre;transform:scaleX(0.9350);transform-origin:100% 0;">0</div>
<div style="position:absolute;left:1069.5px;top:524.56px;font-size:10.43px;line-height:11.99px;color:#000;font-weight:normal;white-space:pre;transform:scaleX(0.9350);transform-origin:0 0;">12-Фев-21*</div>
<div style="position:absolute;right:604.5px;top:524.56px;font-size:10.43px;line-height:11.99px;color:#000;font-weight:normal;white-space:pre;transform:scaleX(0.9350);transform-origin:100% 0;">0.00</div>
<div style="position:absolute;left:527px;top:539px;width:12px;height:16px;background:#80FF80"></div>
<div style="position:absolute;left:539px;top:539px;width:1px;height:16px;background:#C8C8C8"></div>
<div style="position:absolute;left:540px;top:554px;width:678px;height:1px;background:#D6D6D6"></div>
<div style="position:absolute;left:656px;top:539px;width:1px;height:16px;background:#D6D6D6"></div>
<div style="position:absolute;left:950px;top:539px;width:1px;height:16px;background:#D6D6D6"></div>
<div style="position:absolute;left:1004px;top:539px;width:1px;height:16px;background:#D6D6D6"></div>
<div style="position:absolute;left:1066px;top:539px;width:1px;height:16px;background:#D6D6D6"></div>
<div style="position:absolute;left:1128px;top:539px;width:1px;height:16px;background:#D6D6D6"></div>
<div style="position:absolute;left:567px;top:540.56px;font-size:10.43px;line-height:11.99px;color:#000;font-weight:normal;white-space:pre;transform:scaleX(0.9350);transform-origin:0 0;letter-spacing:-0.35px">PM.1020</div>
<div style="position:absolute;left:660px;top:540.56px;font-size:10.43px;line-height:11.99px;color:#000;font-weight:normal;white-space:pre;transform:scaleX(0.9546);transform-origin:0 0;">Завершение этапа разработки ПД</div>
<div style="position:absolute;right:815px;top:540.56px;font-size:10.43px;line-height:11.99px;color:#000;font-weight:normal;white-space:pre;transform:scaleX(0.9350);transform-origin:100% 0;">0</div>
<div style="position:absolute;left:1069.5px;top:540.56px;font-size:10.43px;line-height:11.99px;color:#000;font-weight:normal;white-space:pre;transform:scaleX(0.9350);transform-origin:0 0;">29-Мар-21*</div>
<div style="position:absolute;right:604.5px;top:540.56px;font-size:10.43px;line-height:11.99px;color:#000;font-weight:normal;white-space:pre;transform:scaleX(0.9350);transform-origin:100% 0;">0.00</div>
<div style="position:absolute;left:527px;top:555px;width:12px;height:16px;background:#80FF80"></div>
<div style="position:absolute;left:539px;top:555px;width:1px;height:16px;background:#C8C8C8"></div>
<div style="position:absolute;left:540px;top:570px;width:678px;height:1px;background:#D6D6D6"></div>
<div style="position:absolute;left:656px;top:555px;width:1px;height:16px;background:#D6D6D6"></div>
<div style="position:absolute;left:950px;top:555px;width:1px;height:16px;background:#D6D6D6"></div>
<div style="position:absolute;left:1004px;top:555px;width:1px;height:16px;background:#D6D6D6"></div>
<div style="position:absolute;left:1066px;top:555px;width:1px;height:16px;background:#D6D6D6"></div>
<div style="position:absolute;left:1128px;top:555px;width:1px;height:16px;background:#D6D6D6"></div>
<div style="position:absolute;left:567px;top:556.56px;font-size:10.43px;line-height:11.99px;color:#000;font-weight:normal;white-space:pre;transform:scaleX(0.9350);transform-origin:0 0;letter-spacing:-0.35px">PM.1030</div>
<div style="position:absolute;left:660px;top:556.56px;font-size:10.43px;line-height:11.99px;color:#000;font-weight:normal;white-space:pre;transform:scaleX(0.9500);transform-origin:0 0;">Этап пректирование завершен (Gate 3 пройден)</div>
<div style="position:absolute;right:815px;top:556.56px;font-size:10.43px;line-height:11.99px;color:#000;font-weight:normal;white-space:pre;transform:scaleX(0.9350);transform-origin:100% 0;">0</div>
<div style="position:absolute;left:1069.5px;top:556.56px;font-size:10.43px;line-height:11.99px;color:#000;font-weight:normal;white-space:pre;transform:scaleX(0.9350);transform-origin:0 0;">13-Май-21*</div>
<div style="position:absolute;right:604.5px;top:556.56px;font-size:10.43px;line-height:11.99px;color:#000;font-weight:normal;white-space:pre;transform:scaleX(0.9350);transform-origin:100% 0;">0.00</div>
<div style="position:absolute;left:527px;top:571px;width:12px;height:16px;background:#80FF80"></div>
<div style="position:absolute;left:539px;top:571px;width:1px;height:16px;background:#C8C8C8"></div>
<div style="position:absolute;left:540px;top:586px;width:678px;height:1px;background:#D6D6D6"></div>
<div style="position:absolute;left:656px;top:571px;width:1px;height:16px;background:#D6D6D6"></div>
<div style="position:absolute;left:950px;top:571px;width:1px;height:16px;background:#D6D6D6"></div>
<div style="position:absolute;left:1004px;top:571px;width:1px;height:16px;background:#D6D6D6"></div>
<div style="position:absolute;left:1066px;top:571px;width:1px;height:16px;background:#D6D6D6"></div>
<div style="position:absolute;left:1128px;top:571px;width:1px;height:16px;background:#D6D6D6"></div>
<div style="position:absolute;left:567px;top:572.56px;font-size:10.43px;line-height:11.99px;color:#000;font-weight:normal;white-space:pre;transform:scaleX(0.9350);transform-origin:0 0;letter-spacing:-0.35px">PM.1040</div>
<div style="position:absolute;left:660px;top:572.56px;font-size:10.43px;line-height:11.99px;color:#000;font-weight:normal;white-space:pre;transform:scaleX(0.9537);transform-origin:0 0;">Завершение этапа Подготовка площадки</div>
<div style="position:absolute;right:815px;top:572.56px;font-size:10.43px;line-height:11.99px;color:#000;font-weight:normal;white-space:pre;transform:scaleX(0.9350);transform-origin:100% 0;">0</div>
<div style="position:absolute;left:1069.5px;top:572.56px;font-size:10.43px;line-height:11.99px;color:#000;font-weight:normal;white-space:pre;transform:scaleX(0.9350);transform-origin:0 0;">19-Май-21*</div>
<div style="position:absolute;right:604.5px;top:572.56px;font-size:10.43px;line-height:11.99px;color:#000;font-weight:normal;white-space:pre;transform:scaleX(0.9350);transform-origin:100% 0;">0.00</div>
<div style="position:absolute;left:527px;top:587px;width:12px;height:16px;background:#80FF80"></div>
<div style="position:absolute;left:539px;top:587px;width:1px;height:16px;background:#C8C8C8"></div>
<div style="position:absolute;left:540px;top:602px;width:678px;height:1px;background:#D6D6D6"></div>
<div style="position:absolute;left:656px;top:587px;width:1px;height:16px;background:#D6D6D6"></div>
<div style="position:absolute;left:950px;top:587px;width:1px;height:16px;background:#D6D6D6"></div>
<div style="position:absolute;left:1004px;top:587px;width:1px;height:16px;background:#D6D6D6"></div>
<div style="position:absolute;left:1066px;top:587px;width:1px;height:16px;background:#D6D6D6"></div>
<div style="position:absolute;left:1128px;top:587px;width:1px;height:16px;background:#D6D6D6"></div>
<div style="position:absolute;left:567px;top:588.56px;font-size:10.43px;line-height:11.99px;color:#000;font-weight:normal;white-space:pre;transform:scaleX(0.9350);transform-origin:0 0;letter-spacing:-0.35px">PM.1050</div>
<div style="position:absolute;left:660px;top:588.56px;font-size:10.43px;line-height:11.99px;color:#000;font-weight:normal;white-space:pre;transform:scaleX(0.9771);transform-origin:0 0;">Завершение этапа Котлован</div>
<div style="position:absolute;right:815px;top:588.56px;font-size:10.43px;line-height:11.99px;color:#000;font-weight:normal;white-space:pre;transform:scaleX(0.9350);transform-origin:100% 0;">0</div>
<div style="position:absolute;left:1069.5px;top:588.56px;font-size:10.43px;line-height:11.99px;color:#000;font-weight:normal;white-space:pre;transform:scaleX(0.9350);transform-origin:0 0;">26-Май-21*</div>
<div style="position:absolute;right:604.5px;top:588.56px;font-size:10.43px;line-height:11.99px;color:#000;font-weight:normal;white-space:pre;transform:scaleX(0.9350);transform-origin:100% 0;">0.00</div>
<div style="position:absolute;left:527px;top:603px;width:12px;height:16px;background:#80FF80"></div>
<div style="position:absolute;left:539px;top:603px;width:1px;height:16px;background:#C8C8C8"></div>
<div style="position:absolute;left:540px;top:618px;width:678px;height:1px;background:#D6D6D6"></div>
<div style="position:absolute;left:656px;top:603px;width:1px;height:16px;background:#D6D6D6"></div>
<div style="position:absolute;left:950px;top:603px;width:1px;height:16px;background:#D6D6D6"></div>
<div style="position:absolute;left:1004px;top:603px;width:1px;height:16px;background:#D6D6D6"></div>
<div style="position:absolute;left:1066px;top:603px;width:1px;height:16px;background:#D6D6D6"></div>
<div style="position:absolute;left:1128px;top:603px;width:1px;height:16px;background:#D6D6D6"></div>
<div style="position:absolute;left:567px;top:604.56px;font-size:10.43px;line-height:11.99px;color:#000;font-weight:normal;white-space:pre;transform:scaleX(0.9350);transform-origin:0 0;letter-spacing:-0.35px">PM.1060</div>
<div style="position:absolute;left:660px;top:604.56px;font-size:10.43px;line-height:11.99px;color:#000;font-weight:normal;white-space:pre;transform:scaleX(0.9621);transform-origin:0 0;">Завершение этапа Фундамент</div>
<div style="position:absolute;right:815px;top:604.56px;font-size:10.43px;line-height:11.99px;color:#000;font-weight:normal;white-space:pre;transform:scaleX(0.9350);transform-origin:100% 0;">0</div>
<div style="position:absolute;left:1069.5px;top:604.56px;font-size:10.43px;line-height:11.99px;color:#000;font-weight:normal;white-space:pre;transform:scaleX(0.9350);transform-origin:0 0;">16-Июн-21*</div>
<div style="position:absolute;right:604.5px;top:604.56px;font-size:10.43px;line-height:11.99px;color:#000;font-weight:normal;white-space:pre;transform:scaleX(0.9350);transform-origin:100% 0;">0.00</div>
<div style="position:absolute;left:527px;top:619px;width:12px;height:16px;background:#80FF80"></div>
<div style="position:absolute;left:539px;top:619px;width:1px;height:16px;background:#C8C8C8"></div>
<div style="position:absolute;left:540px;top:634px;width:678px;height:1px;background:#D6D6D6"></div>
<div style="position:absolute;left:656px;top:619px;width:1px;height:16px;background:#D6D6D6"></div>
<div style="position:absolute;left:950px;top:619px;width:1px;height:16px;background:#D6D6D6"></div>
<div style="position:absolute;left:1004px;top:619px;width:1px;height:16px;background:#D6D6D6"></div>
<div style="position:absolute;left:1066px;top:619px;width:1px;height:16px;background:#D6D6D6"></div>
<div style="position:absolute;left:1128px;top:619px;width:1px;height:16px;background:#D6D6D6"></div>
<div style="position:absolute;left:567px;top:620.56px;font-size:10.43px;line-height:11.99px;color:#000;font-weight:normal;white-space:pre;transform:scaleX(0.9350);transform-origin:0 0;letter-spacing:-0.35px">PM.1070</div>
<div style="position:absolute;left:660px;top:620.56px;font-size:10.43px;line-height:11.99px;color:#000;font-weight:normal;white-space:pre;transform:scaleX(0.9602);transform-origin:0 0;">Завершение этапа Возведение строительного каркаса</div>
<div style="position:absolute;right:815px;top:620.56px;font-size:10.43px;line-height:11.99px;color:#000;font-weight:normal;white-space:pre;transform:scaleX(0.9350);transform-origin:100% 0;">0</div>
<div style="position:absolute;left:1069.5px;top:620.56px;font-size:10.43px;line-height:11.99px;color:#000;font-weight:normal;white-space:pre;transform:scaleX(0.9350);transform-origin:0 0;">17-Авг-21*</div>
<div style="position:absolute;right:604.5px;top:620.56px;font-size:10.43px;line-height:11.99px;color:#000;font-weight:normal;white-space:pre;transform:scaleX(0.9350);transform-origin:100% 0;">0.00</div>
<div style="position:absolute;left:527px;top:635px;width:12px;height:16px;background:#80FF80"></div>
<div style="position:absolute;left:539px;top:635px;width:1px;height:16px;background:#C8C8C8"></div>
<div style="position:absolute;left:540px;top:650px;width:678px;height:1px;background:#D6D6D6"></div>
<div style="position:absolute;left:656px;top:635px;width:1px;height:16px;background:#D6D6D6"></div>
<div style="position:absolute;left:950px;top:635px;width:1px;height:16px;background:#D6D6D6"></div>
<div style="position:absolute;left:1004px;top:635px;width:1px;height:16px;background:#D6D6D6"></div>
<div style="position:absolute;left:1066px;top:635px;width:1px;height:16px;background:#D6D6D6"></div>
<div style="position:absolute;left:1128px;top:635px;width:1px;height:16px;background:#D6D6D6"></div>
<div style="position:absolute;left:567px;top:636.56px;font-size:10.43px;line-height:11.99px;color:#000;font-weight:normal;white-space:pre;transform:scaleX(0.9350);transform-origin:0 0;letter-spacing:-0.35px">PM.1080</div>
<div style="position:absolute;left:660px;top:636.56px;font-size:10.43px;line-height:11.99px;color:#000;font-weight:normal;white-space:pre;transform:scaleX(0.9752);transform-origin:0 0;">Завершение этапа Кровля</div>
<div style="position:absolute;right:815px;top:636.56px;font-size:10.43px;line-height:11.99px;color:#000;font-weight:normal;white-space:pre;transform:scaleX(0.9350);transform-origin:100% 0;">0</div>
<div style="position:absolute;left:1069.5px;top:636.56px;font-size:10.43px;line-height:11.99px;color:#000;font-weight:normal;white-space:pre;transform:scaleX(0.9350);transform-origin:0 0;">27-Авг-21*</div>
<div style="position:absolute;right:604.5px;top:636.56px;font-size:10.43px;line-height:11.99px;color:#000;font-weight:normal;white-space:pre;transform:scaleX(0.9350);transform-origin:100% 0;">0.00</div>
<div style="position:absolute;left:527px;top:651px;width:12px;height:17px;background:#80FF80"></div>
<div style="position:absolute;left:539px;top:651px;width:1px;height:17px;background:#C8C8C8"></div>
<div style="position:absolute;left:540px;top:667px;width:678px;height:1px;background:#D6D6D6"></div>
<div style="position:absolute;left:656px;top:651px;width:1px;height:17px;background:#D6D6D6"></div>
<div style="position:absolute;left:950px;top:651px;width:1px;height:17px;background:#D6D6D6"></div>
<div style="position:absolute;left:1004px;top:651px;width:1px;height:17px;background:#D6D6D6"></div>
<div style="position:absolute;left:1066px;top:651px;width:1px;height:17px;background:#D6D6D6"></div>
<div style="position:absolute;left:1128px;top:651px;width:1px;height:17px;background:#D6D6D6"></div>
<div style="position:absolute;left:567px;top:652.56px;font-size:10.43px;line-height:11.99px;color:#000;font-weight:normal;white-space:pre;transform:scaleX(0.9350);transform-origin:0 0;letter-spacing:-0.35px">PM.1090</div>
<div style="position:absolute;left:660px;top:652.56px;font-size:10.43px;line-height:11.99px;color:#000;font-weight:normal;white-space:pre;transform:scaleX(0.9593);transform-origin:0 0;">Завершение этапа Фасад</div>
<div style="position:absolute;right:815px;top:652.56px;font-size:10.43px;line-height:11.99px;color:#000;font-weight:normal;white-space:pre;transform:scaleX(0.9350);transform-origin:100% 0;">0</div>
<div style="position:absolute;left:1069.5px;top:652.56px;font-size:10.43px;line-height:11.99px;color:#000;font-weight:normal;white-space:pre;transform:scaleX(0.9350);transform-origin:0 0;">12-Сен-21*</div>
<div style="position:absolute;right:604.5px;top:652.56px;font-size:10.43px;line-height:11.99px;color:#000;font-weight:normal;white-space:pre;transform:scaleX(0.9350);transform-origin:100% 0;">0.00</div>
<div style="position:absolute;left:527px;top:668px;width:12px;height:16px;background:#80FF80"></div>
<div style="position:absolute;left:539px;top:668px;width:1px;height:16px;background:#C8C8C8"></div>
<div style="position:absolute;left:540px;top:683px;width:678px;height:1px;background:#D6D6D6"></div>
<div style="position:absolute;left:656px;top:668px;width:1px;height:16px;background:#D6D6D6"></div>
<div style="position:absolute;left:950px;top:668px;width:1px;height:16px;background:#D6D6D6"></div>
<div style="position:absolute;left:1004px;top:668px;width:1px;height:16px;background:#D6D6D6"></div>
<div style="position:absolute;left:1066px;top:668px;width:1px;height:16px;background:#D6D6D6"></div>
<div style="position:absolute;left:1128px;top:668px;width:1px;height:16px;background:#D6D6D6"></div>
<div style="position:absolute;left:567px;top:669.56px;font-size:10.43px;line-height:11.99px;color:#000;font-weight:normal;white-space:pre;transform:scaleX(0.9350);transform-origin:0 0;letter-spacing:-0.35px">PM.1100</div>
<div style="position:absolute;left:660px;top:669.56px;font-size:10.43px;line-height:11.99px;color:#000;font-weight:normal;white-space:pre;transform:scaleX(0.9621);transform-origin:0 0;">Завершение этапа Внутренняя отделка</div>
<div style="position:absolute;right:815px;top:669.56px;font-size:10.43px;line-height:11.99px;color:#000;font-weight:normal;white-space:pre;transform:scaleX(0.9350);transform-origin:100% 0;">0</div>
<div style="position:absolute;left:1069.5px;top:669.56px;font-size:10.43px;line-height:11.99px;color:#000;font-weight:normal;white-space:pre;transform:scaleX(0.9350);transform-origin:0 0;">30-Окт-21*</div>
<div style="position:absolute;right:604.5px;top:669.56px;font-size:10.43px;line-height:11.99px;color:#000;font-weight:normal;white-space:pre;transform:scaleX(0.9350);transform-origin:100% 0;">0.00</div>
<div style="position:absolute;left:527px;top:684px;width:12px;height:16px;background:#80FF80"></div>
<div style="position:absolute;left:539px;top:684px;width:1px;height:16px;background:#C8C8C8"></div>
<div style="position:absolute;left:540px;top:699px;width:678px;height:1px;background:#D6D6D6"></div>
<div style="position:absolute;left:656px;top:684px;width:1px;height:16px;background:#D6D6D6"></div>
<div style="position:absolute;left:950px;top:684px;width:1px;height:16px;background:#D6D6D6"></div>
<div style="position:absolute;left:1004px;top:684px;width:1px;height:16px;background:#D6D6D6"></div>
<div style="position:absolute;left:1066px;top:684px;width:1px;height:16px;background:#D6D6D6"></div>
<div style="position:absolute;left:1128px;top:684px;width:1px;height:16px;background:#D6D6D6"></div>
<div style="position:absolute;left:567px;top:685.56px;font-size:10.43px;line-height:11.99px;color:#000;font-weight:normal;white-space:pre;transform:scaleX(0.9350);transform-origin:0 0;letter-spacing:-0.35px">PM.1110</div>
<div style="position:absolute;left:660px;top:685.56px;font-size:10.43px;line-height:11.99px;color:#000;font-weight:normal;white-space:pre;transform:scaleX(0.9584);transform-origin:0 0;">Завершение этапа Монтажные работы</div>
<div style="position:absolute;right:815px;top:685.56px;font-size:10.43px;line-height:11.99px;color:#000;font-weight:normal;white-space:pre;transform:scaleX(0.9350);transform-origin:100% 0;">0</div>
<div style="position:absolute;left:1069.5px;top:685.56px;font-size:10.43px;line-height:11.99px;color:#000;font-weight:normal;white-space:pre;transform:scaleX(0.9350);transform-origin:0 0;">13-Ноя-21*</div>
<div style="position:absolute;right:604.5px;top:685.56px;font-size:10.43px;line-height:11.99px;color:#000;font-weight:normal;white-space:pre;transform:scaleX(0.9350);transform-origin:100% 0;">0.00</div>
<div style="position:absolute;left:527px;top:700px;width:12px;height:16px;background:#80FF80"></div>
<div style="position:absolute;left:539px;top:700px;width:1px;height:16px;background:#C8C8C8"></div>
<div style="position:absolute;left:540px;top:715px;width:678px;height:1px;background:#D6D6D6"></div>
<div style="position:absolute;left:656px;top:700px;width:1px;height:16px;background:#D6D6D6"></div>
<div style="position:absolute;left:950px;top:700px;width:1px;height:16px;background:#D6D6D6"></div>
<div style="position:absolute;left:1004px;top:700px;width:1px;height:16px;background:#D6D6D6"></div>
<div style="position:absolute;left:1066px;top:700px;width:1px;height:16px;background:#D6D6D6"></div>
<div style="position:absolute;left:1128px;top:700px;width:1px;height:16px;background:#D6D6D6"></div>
<div style="position:absolute;left:567px;top:701.56px;font-size:10.43px;line-height:11.99px;color:#000;font-weight:normal;white-space:pre;transform:scaleX(0.9350);transform-origin:0 0;letter-spacing:-0.35px">PM.1120</div>
<div style="position:absolute;left:660px;top:701.56px;font-size:10.43px;line-height:11.99px;color:#000;font-weight:normal;white-space:pre;transform:scaleX(0.9444);transform-origin:0 0;">Окончание проекта (Gate 4. Реализация проекта завершена)</div>
<div style="position:absolute;right:815px;top:701.56px;font-size:10.43px;line-height:11.99px;color:#000;font-weight:normal;white-space:pre;transform:scaleX(0.9350);transform-origin:100% 0;">0</div>
<div style="position:absolute;left:1069.5px;top:701.56px;font-size:10.43px;line-height:11.99px;color:#000;font-weight:normal;white-space:pre;transform:scaleX(0.9350);transform-origin:0 0;">30-Ноя-21*</div>
<div style="position:absolute;right:604.5px;top:701.56px;font-size:10.43px;line-height:11.99px;color:#000;font-weight:normal;white-space:pre;transform:scaleX(0.9350);transform-origin:100% 0;">0.00</div>
<div style="position:absolute;left:1217px;top:61px;width:1px;height:657px;background:#C0C0C0"></div>
<div style="position:absolute;left:1218px;top:61px;width:3px;height:657px;background:#F0F0F0"></div>
<div style="position:absolute;left:1221px;top:61px;width:1px;height:657px;background:#6A6A6A"></div>
<div style="position:absolute;left:1222px;top:61px;width:565px;height:657px;overflow:hidden;background:#fff">
<div style="position:absolute;left:0;top:0;width:565px;height:29px;background:#F0F0F0"></div>
<div style="position:absolute;left:0;top:-1px;width:565px;height:2px;background:#C4C4C4"></div>
<div style="position:absolute;left:-13px;top:16px;width:1px;height:13px;background:#4A4A4A"></div>
<div style="position:absolute;left:-12px;top:16px;width:1px;height:13px;background:#FFFFFF"></div>
<div style="position:absolute;left:-64.4px;width:60px;top:18.1px;font-size:10.6px;line-height:11px;text-align:center;white-space:pre;transform:scaleX(0.92)">Окт</div>
<div style="position:absolute;left:27px;top:16px;width:1px;height:13px;background:#4A4A4A"></div>
<div style="position:absolute;left:28px;top:16px;width:1px;height:13px;background:#FFFFFF"></div>
<div style="position:absolute;left:-23.0px;width:60px;top:18.1px;font-size:10.6px;line-height:11px;text-align:center;white-space:pre;transform:scaleX(0.92)">Ноя</div>
<div style="position:absolute;left:69px;top:16px;width:1px;height:13px;background:#4A4A4A"></div>
<div style="position:absolute;left:70px;top:16px;width:1px;height:13px;background:#FFFFFF"></div>
<div style="position:absolute;left:18.3px;width:60px;top:18.1px;font-size:10.6px;line-height:11px;text-align:center;white-space:pre;transform:scaleX(0.92)">Дек</div>
<div style="position:absolute;left:111px;top:16px;width:1px;height:13px;background:#4A4A4A"></div>
<div style="position:absolute;left:112px;top:16px;width:1px;height:13px;background:#FFFFFF"></div>
<div style="position:absolute;left:60.3px;width:60px;top:18.1px;font-size:10.6px;line-height:11px;text-align:center;white-space:pre;transform:scaleX(0.92)">Янв</div>
<div style="position:absolute;left:149px;top:16px;width:1px;height:13px;background:#4A4A4A"></div>
<div style="position:absolute;left:150px;top:16px;width:1px;height:13px;background:#FFFFFF"></div>
<div style="position:absolute;left:100.3px;width:60px;top:18.1px;font-size:10.6px;line-height:11px;text-align:center;white-space:pre;transform:scaleX(0.92)">Фев</div>
<div style="position:absolute;left:191px;top:16px;width:1px;height:13px;background:#4A4A4A"></div>
<div style="position:absolute;left:192px;top:16px;width:1px;height:13px;background:#FFFFFF"></div>
<div style="position:absolute;left:140.3px;width:60px;top:18.1px;font-size:10.6px;line-height:11px;text-align:center;white-space:pre;transform:scaleX(0.92)">Мар</div>
<div style="position:absolute;left:232px;top:16px;width:1px;height:13px;background:#4A4A4A"></div>
<div style="position:absolute;left:233px;top:16px;width:1px;height:13px;background:#FFFFFF"></div>
<div style="position:absolute;left:181.6px;width:60px;top:18.1px;font-size:10.6px;line-height:11px;text-align:center;white-space:pre;transform:scaleX(0.92)">Апр</div>
<div style="position:absolute;left:274px;top:16px;width:1px;height:13px;background:#4A4A4A"></div>
<div style="position:absolute;left:275px;top:16px;width:1px;height:13px;background:#FFFFFF"></div>
<div style="position:absolute;left:222.9px;width:60px;top:18.1px;font-size:10.6px;line-height:11px;text-align:center;white-space:pre;transform:scaleX(0.92)">Май</div>
<div style="position:absolute;left:315px;top:16px;width:1px;height:13px;background:#4A4A4A"></div>
<div style="position:absolute;left:316px;top:16px;width:1px;height:13px;background:#FFFFFF"></div>
<div style="position:absolute;left:264.3px;width:60px;top:18.1px;font-size:10.6px;line-height:11px;text-align:center;white-space:pre;transform:scaleX(0.92)">Июн</div>
<div style="position:absolute;left:357px;top:16px;width:1px;height:13px;background:#4A4A4A"></div>
<div style="position:absolute;left:358px;top:16px;width:1px;height:13px;background:#FFFFFF"></div>
<div style="position:absolute;left:305.6px;width:60px;top:18.1px;font-size:10.6px;line-height:11px;text-align:center;white-space:pre;transform:scaleX(0.92)">Июл</div>
<div style="position:absolute;left:399px;top:16px;width:1px;height:13px;background:#4A4A4A"></div>
<div style="position:absolute;left:400px;top:16px;width:1px;height:13px;background:#FFFFFF"></div>
<div style="position:absolute;left:347.6px;width:60px;top:18.1px;font-size:10.6px;line-height:11px;text-align:center;white-space:pre;transform:scaleX(0.92)">Авг</div>
<div style="position:absolute;left:439px;top:16px;width:1px;height:13px;background:#4A4A4A"></div>
<div style="position:absolute;left:440px;top:16px;width:1px;height:13px;background:#FFFFFF"></div>
<div style="position:absolute;left:389.0px;width:60px;top:18.1px;font-size:10.6px;line-height:11px;text-align:center;white-space:pre;transform:scaleX(0.92)">Сен</div>
<div style="position:absolute;left:481px;top:16px;width:1px;height:13px;background:#4A4A4A"></div>
<div style="position:absolute;left:482px;top:16px;width:1px;height:13px;background:#FFFFFF"></div>
<div style="position:absolute;left:430.3px;width:60px;top:18.1px;font-size:10.6px;line-height:11px;text-align:center;white-space:pre;transform:scaleX(0.92)">Окт</div>
<div style="position:absolute;left:522px;top:16px;width:1px;height:13px;background:#4A4A4A"></div>
<div style="position:absolute;left:523px;top:16px;width:1px;height:13px;background:#FFFFFF"></div>
<div style="position:absolute;left:471.6px;width:60px;top:18.1px;font-size:10.6px;line-height:11px;text-align:center;white-space:pre;transform:scaleX(0.92)">Ноя</div>
<div style="position:absolute;left:564px;top:16px;width:1px;height:13px;background:#4A4A4A"></div>
<div style="position:absolute;left:565px;top:16px;width:1px;height:13px;background:#FFFFFF"></div>
<div style="position:absolute;left:513.0px;width:60px;top:18.1px;font-size:10.6px;line-height:11px;text-align:center;white-space:pre;transform:scaleX(0.92)">Дек</div>
<div style="position:absolute;left:69px;top:1px;width:1px;height:15px;background:#4A4A4A"></div>
<div style="position:absolute;left:70px;top:1px;width:1px;height:15px;background:#FFFFFF"></div>
<div style="position:absolute;left:-33.0px;width:80px;top:1.8px;font-size:10.6px;line-height:11px;text-align:center;white-space:pre;transform:scaleX(0.92)">Кв. 4, 2020</div>
<div style="position:absolute;left:191px;top:1px;width:1px;height:15px;background:#4A4A4A"></div>
<div style="position:absolute;left:192px;top:1px;width:1px;height:15px;background:#FFFFFF"></div>
<div style="position:absolute;left:90.3px;width:80px;top:1.8px;font-size:10.6px;line-height:11px;text-align:center;white-space:pre;transform:scaleX(0.92)">Кв. 1, 2021</div>
<div style="position:absolute;left:315px;top:1px;width:1px;height:15px;background:#4A4A4A"></div>
<div style="position:absolute;left:316px;top:1px;width:1px;height:15px;background:#FFFFFF"></div>
<div style="position:absolute;left:212.9px;width:80px;top:1.8px;font-size:10.6px;line-height:11px;text-align:center;white-space:pre;transform:scaleX(0.92)">Кв. 2, 2021</div>
<div style="position:absolute;left:439px;top:1px;width:1px;height:15px;background:#4A4A4A"></div>
<div style="position:absolute;left:440px;top:1px;width:1px;height:15px;background:#FFFFFF"></div>
<div style="position:absolute;left:337.0px;width:80px;top:1.8px;font-size:10.6px;line-height:11px;text-align:center;white-space:pre;transform:scaleX(0.92)">Кв. 3, 2021</div>
<div style="position:absolute;left:564px;top:1px;width:1px;height:15px;background:#4A4A4A"></div>
<div style="position:absolute;left:565px;top:1px;width:1px;height:15px;background:#FFFFFF"></div>
<div style="position:absolute;left:461.6px;width:80px;top:1.8px;font-size:10.6px;line-height:11px;text-align:center;white-space:pre;transform:scaleX(0.92)">Кв. 4, 2021</div>
<div style="position:absolute;left:0;top:15px;width:565px;height:1px;background:#202020"></div>
<div style="position:absolute;left:0;top:28px;width:565px;height:1px;background:#E4E4E4"></div>
<div style="position:absolute;left:564px;top:0;width:1px;height:29px;background:#202020"></div>
<svg style="position:absolute;left:0;top:0" width="565" height="657"><line x1="-12.5" y1="29" x2="-12.5" y2="657" stroke="#C4C4C4" stroke-width="1" stroke-dasharray="2.5 2.7"/><line x1="27.5" y1="29" x2="27.5" y2="657" stroke="#C4C4C4" stroke-width="1" stroke-dasharray="2.5 2.7"/><line x1="69.5" y1="29" x2="69.5" y2="657" stroke="#C4C4C4" stroke-width="1" stroke-dasharray="2.5 2.7"/><line x1="111.5" y1="29" x2="111.5" y2="657" stroke="#C4C4C4" stroke-width="1" stroke-dasharray="2.5 2.7"/><line x1="149.5" y1="29" x2="149.5" y2="657" stroke="#C4C4C4" stroke-width="1" stroke-dasharray="2.5 2.7"/><line x1="191.5" y1="29" x2="191.5" y2="657" stroke="#C4C4C4" stroke-width="1" stroke-dasharray="2.5 2.7"/><line x1="232.5" y1="29" x2="232.5" y2="657" stroke="#C4C4C4" stroke-width="1" stroke-dasharray="2.5 2.7"/><line x1="274.5" y1="29" x2="274.5" y2="657" stroke="#C4C4C4" stroke-width="1" stroke-dasharray="2.5 2.7"/><line x1="315.5" y1="29" x2="315.5" y2="657" stroke="#C4C4C4" stroke-width="1" stroke-dasharray="2.5 2.7"/><line x1="357.5" y1="29" x2="357.5" y2="657" stroke="#C4C4C4" stroke-width="1" stroke-dasharray="2.5 2.7"/><line x1="399.5" y1="29" x2="399.5" y2="657" stroke="#C4C4C4" stroke-width="1" stroke-dasharray="2.5 2.7"/><line x1="439.5" y1="29" x2="439.5" y2="657" stroke="#C4C4C4" stroke-width="1" stroke-dasharray="2.5 2.7"/><line x1="481.5" y1="29" x2="481.5" y2="657" stroke="#C4C4C4" stroke-width="1" stroke-dasharray="2.5 2.7"/><line x1="522.5" y1="29" x2="522.5" y2="657" stroke="#C4C4C4" stroke-width="1" stroke-dasharray="2.5 2.7"/><line x1="564.5" y1="29" x2="564.5" y2="657" stroke="#C4C4C4" stroke-width="1" stroke-dasharray="2.5 2.7"/><line x1="0" y1="120.5" x2="565" y2="120.5" stroke="#C4C4C4" stroke-width="1" stroke-dasharray="2.5 2.7"/><line x1="0" y1="210.5" x2="565" y2="210.5" stroke="#C4C4C4" stroke-width="1" stroke-dasharray="2.5 2.7"/><line x1="0" y1="291.5" x2="565" y2="291.5" stroke="#C4C4C4" stroke-width="1" stroke-dasharray="2.5 2.7"/><line x1="0" y1="371.5" x2="565" y2="371.5" stroke="#C4C4C4" stroke-width="1" stroke-dasharray="2.5 2.7"/><line x1="0" y1="461.5" x2="565" y2="461.5" stroke="#C4C4C4" stroke-width="1" stroke-dasharray="2.5 2.7"/><line x1="0" y1="541.5" x2="565" y2="541.5" stroke="#C4C4C4" stroke-width="1" stroke-dasharray="2.5 2.7"/><line x1="0" y1="622.5" x2="565" y2="622.5" stroke="#C4C4C4" stroke-width="1" stroke-dasharray="2.5 2.7"/><line x1="86.10" y1="29" x2="86.10" y2="657" stroke="#5A5AFF" stroke-width="1.7"/><path d="M45.67 35.20 L470.45 35.20 L466.55 42.90 L463.95 39.60 L51.97 39.60 L49.17 42.90 Z" fill="#000"/><path d="M45.67 56.20 L470.45 56.20 L466.55 63.90 L463.95 60.60 L51.97 60.60 L49.17 63.90 Z" fill="#000"/><path d="M83.62 156.20 L530.08 156.20 L526.18 163.90 L523.58 160.60 L89.92 160.60 L87.12 163.90 Z" fill="#000"/><path d="M83.62 178.20 L530.08 178.20 L526.18 185.90 L523.58 182.60 L89.92 182.60 L87.12 185.90 Z" fill="#000"/><path d="M83.62 407.20 L526.01 407.20 L522.11 414.90 L519.51 411.60 L89.92 411.60 L87.12 414.90 Z" fill="#000"/><path d="M83.62 428.20 L526.01 428.20 L522.11 435.90 L519.51 432.60 L89.92 432.60 L87.12 435.90 Z" fill="#000"/><rect x="87.76" y="110.40" width="7.5" height="2" fill="#FF0000"/><rect x="92.76" y="109.30" width="2.6" height="3.8" fill="#FF0000"/><polyline points="94.50,111.50 98.50,111.50 98.50,195.50 88.50,195.50 88.50,198.50" fill="none" stroke="#FF0000" stroke-width="1"/><rect x="190.77" y="126.40" width="7.5" height="2" fill="#FF0000"/><rect x="195.77" y="125.30" width="2.6" height="3.8" fill="#FF0000"/><polyline points="197.50,127.50 201.50,127.50 201.50,228.50 188.50,228.50 188.50,231.50" fill="none" stroke="#FF0000" stroke-width="1"/><rect x="467.25" y="142.40" width="7.5" height="2" fill="#FF0000"/><rect x="472.25" y="141.30" width="2.6" height="3.8" fill="#FF0000"/><polyline points="474.50,143.50 477.50,143.50 477.50,388.50 525.50,388.50 525.50,391.50" fill="none" stroke="#FF0000" stroke-width="1"/><rect x="79.62" y="200.40" width="7.5" height="2" fill="#FF0000"/><rect x="79.52" y="199.30" width="2.6" height="3.8" fill="#FF0000"/><polyline points="80.50,201.50 76.50,201.50 76.50,445.50 88.50,445.50 88.50,448.50" fill="none" stroke="#FF0000" stroke-width="1"/><rect x="128.42" y="216.40" width="7.5" height="2" fill="#FF0000"/><rect x="133.42" y="215.30" width="2.6" height="3.8" fill="#FF0000"/><polyline points="135.50,217.50 139.50,217.50 139.50,462.50 127.50,462.50 127.50,465.50" fill="none" stroke="#FF0000" stroke-width="1"/><rect x="189.41" y="233.40" width="7.5" height="2" fill="#FF0000"/><rect x="194.41" y="232.30" width="2.6" height="3.8" fill="#FF0000"/><polyline points="196.50,234.50 200.50,234.50 200.50,478.50 188.50,478.50 188.50,481.50" fill="none" stroke="#FF0000" stroke-width="1"/><rect x="250.40" y="249.40" width="7.5" height="2" fill="#FF0000"/><rect x="255.40" y="248.30" width="2.6" height="3.8" fill="#FF0000"/><polyline points="257.50,250.50 261.50,250.50 261.50,494.50 249.50,494.50 249.50,497.50" fill="none" stroke="#FF0000" stroke-width="1"/><rect x="258.53" y="265.40" width="7.5" height="2" fill="#FF0000"/><rect x="263.53" y="264.30" width="2.6" height="3.8" fill="#FF0000"/><polyline points="265.50,266.50 269.50,266.50 269.50,510.50 257.50,510.50 257.50,513.50" fill="none" stroke="#FF0000" stroke-width="1"/><rect x="268.02" y="281.40" width="7.5" height="2" fill="#FF0000"/><rect x="273.02" y="280.30" width="2.6" height="3.8" fill="#FF0000"/><polyline points="275.50,282.50 278.50,282.50 278.50,526.50 267.50,526.50 267.50,529.50" fill="none" stroke="#FF0000" stroke-width="1"/><rect x="296.48" y="297.40" width="7.5" height="2" fill="#FF0000"/><rect x="301.48" y="296.30" width="2.6" height="3.8" fill="#FF0000"/><polyline points="303.50,298.50 307.50,298.50 307.50,542.50 295.50,542.50 295.50,545.50" fill="none" stroke="#FF0000" stroke-width="1"/><rect x="380.51" y="313.40" width="7.5" height="2" fill="#FF0000"/><rect x="385.51" y="312.30" width="2.6" height="3.8" fill="#FF0000"/><polyline points="387.50,314.50 391.50,314.50 391.50,558.50 379.50,558.50 379.50,561.50" fill="none" stroke="#FF0000" stroke-width="1"/><rect x="394.06" y="329.40" width="7.5" height="2" fill="#FF0000"/><rect x="399.06" y="328.30" width="2.6" height="3.8" fill="#FF0000"/><polyline points="401.50,330.50 404.50,330.50 404.50,574.50 393.50,574.50 393.50,577.50" fill="none" stroke="#FF0000" stroke-width="1"/><rect x="419.81" y="345.40" width="7.5" height="2" fill="#FF0000"/><rect x="424.81" y="344.30" width="2.6" height="3.8" fill="#FF0000"/><polyline points="426.50,346.50 430.50,346.50 430.50,590.50 414.50,590.50 414.50,593.50" fill="none" stroke="#FF0000" stroke-width="1"/><rect x="484.87" y="361.40" width="7.5" height="2" fill="#FF0000"/><rect x="489.87" y="360.30" width="2.6" height="3.8" fill="#FF0000"/><polyline points="491.50,362.50 495.50,362.50 495.50,607.50 479.50,607.50 479.50,610.50" fill="none" stroke="#FF0000" stroke-width="1"/><rect x="503.84" y="377.40" width="7.5" height="2" fill="#000000"/><rect x="508.84" y="376.30" width="2.6" height="3.8" fill="#000000"/><polyline points="510.50,378.50 514.50,378.50 514.50,623.50 498.50,623.50 498.50,626.50" fill="none" stroke="#000000" stroke-width="1" stroke-dasharray="2 2"/><rect x="526.88" y="393.40" width="7.5" height="2" fill="#FF0000"/><rect x="531.88" y="392.30" width="2.6" height="3.8" fill="#FF0000"/><polyline points="533.50,394.50 537.50,394.50 537.50,639.50 521.50,639.50 521.50,642.50" fill="none" stroke="#FF0000" stroke-width="1"/><path d="M49.27 76.30 L53.07 80.30 L49.27 84.30 L45.47 80.30 Z" fill="#000"/><path d="M67.79 92.30 L71.59 96.30 L67.79 100.30 L63.99 96.30 Z" fill="#000"/><path d="M86.76 108.30 L90.56 112.30 L86.76 116.30 L82.96 112.30 Z" fill="#000"/><path d="M189.77 124.30 L193.57 128.30 L189.77 132.30 L185.97 128.30 Z" fill="#000"/><path d="M466.25 140.30 L470.05 144.30 L466.25 148.30 L462.45 144.30 Z" fill="#000"/><path d="M88.12 198.30 L91.92 202.30 L88.12 206.30 L84.32 202.30 Z" fill="#000"/><path d="M127.42 214.30 L131.22 218.30 L127.42 222.30 L123.62 218.30 Z" fill="#000"/><path d="M188.41 231.30 L192.21 235.30 L188.41 239.30 L184.61 235.30 Z" fill="#000"/><path d="M249.40 247.30 L253.20 251.30 L249.40 255.30 L245.60 251.30 Z" fill="#000"/><path d="M257.53 263.30 L261.33 267.30 L257.53 271.30 L253.73 267.30 Z" fill="#000"/><path d="M267.02 279.30 L270.82 283.30 L267.02 287.30 L263.22 283.30 Z" fill="#000"/><path d="M295.48 295.30 L299.28 299.30 L295.48 303.30 L291.68 299.30 Z" fill="#000"/><path d="M379.51 311.30 L383.31 315.30 L379.51 319.30 L375.71 315.30 Z" fill="#000"/><path d="M393.06 327.30 L396.86 331.30 L393.06 335.30 L389.26 331.30 Z" fill="#000"/><path d="M418.81 343.30 L422.61 347.30 L418.81 351.30 L415.01 347.30 Z" fill="#000"/><path d="M483.87 359.30 L487.67 363.30 L483.87 367.30 L480.07 363.30 Z" fill="#000"/><path d="M502.84 375.30 L506.64 379.30 L502.84 383.30 L499.04 379.30 Z" fill="#000"/><path d="M525.88 391.30 L529.68 395.30 L525.88 399.30 L522.08 395.30 Z" fill="#000"/><path d="M88.12 448.30 L91.92 452.30 L88.12 456.30 L84.32 452.30 Z" fill="#000"/><path d="M127.42 465.30 L131.22 469.30 L127.42 473.30 L123.62 469.30 Z" fill="#000"/><path d="M188.41 481.30 L192.21 485.30 L188.41 489.30 L184.61 485.30 Z" fill="#000"/><path d="M249.40 497.30 L253.20 501.30 L249.40 505.30 L245.60 501.30 Z" fill="#000"/><path d="M257.53 513.30 L261.33 517.30 L257.53 521.30 L253.73 517.30 Z" fill="#000"/><path d="M267.02 529.30 L270.82 533.30 L267.02 537.30 L263.22 533.30 Z" fill="#000"/><path d="M295.48 545.30 L299.28 549.30 L295.48 553.30 L291.68 549.30 Z" fill="#000"/><path d="M379.51 561.30 L383.31 565.30 L379.51 569.30 L375.71 565.30 Z" fill="#000"/><path d="M393.06 577.30 L396.86 581.30 L393.06 585.30 L389.26 581.30 Z" fill="#000"/><path d="M414.75 593.30 L418.55 597.30 L414.75 601.30 L410.95 597.30 Z" fill="#000"/><path d="M479.80 610.30 L483.60 614.30 L479.80 618.30 L476.00 614.30 Z" fill="#000"/><path d="M498.77 626.30 L502.57 630.30 L498.77 634.30 L494.97 630.30 Z" fill="#000"/><path d="M521.81 642.30 L525.61 646.30 L521.81 650.30 L518.01 646.30 Z" fill="#000"/>
</svg>
<div style="position:absolute;left:475.8475999999999px;top:32.71px;font-size:10.48px;line-height:12.05px;color:#000;font-weight:normal;white-space:pre;transform:scaleX(0.9350);transform-origin:0 0;">20-Окт-21, L-1  Директивный График Проекта (Level 1)</div>
<div style="position:absolute;left:475.8475999999999px;top:53.71px;font-size:10.48px;line-height:12.05px;color:#000;font-weight:normal;white-space:pre;transform:scaleX(0.9350);transform-origin:0 0;">20-Окт-21, L-1.MS  Stage Gates - Точки принятия ключевых решений</div>
<div style="position:absolute;left:57.670499999999855px;top:74.01px;font-size:10.48px;line-height:12.05px;color:#000;font-weight:normal;white-space:pre;transform:scaleX(0.9350);transform-origin:0 0;">Gate 0.Старт инициации проекта</div>
<div style="position:absolute;left:76.18939999999989px;top:90.01px;font-size:10.48px;line-height:12.05px;color:#000;font-weight:normal;white-space:pre;transform:scaleX(0.9350);transform-origin:0 0;">Gate 1. Инициация завершена</div>
<div style="position:absolute;left:95.1636px;top:106.01px;font-size:10.48px;line-height:12.05px;color:#000;font-weight:normal;white-space:pre;transform:scaleX(0.9350);transform-origin:0 0;">Gate 2. Бизнес-план утвержден</div>
<div style="position:absolute;left:198.16639999999998px;top:122.01px;font-size:10.48px;line-height:12.05px;color:#000;font-weight:normal;white-space:pre;transform:scaleX(0.9350);transform-origin:0 0;">Gate 3. Проектирование и планирование завершено</div>
<div style="position:absolute;left:474.6475999999999px;top:138.01px;font-size:10.48px;line-height:12.05px;color:#000;font-weight:normal;white-space:pre;transform:scaleX(0.9350);transform-origin:0 0;">Gate 4. Реализация проекта завершена</div>
<div style="position:absolute;left:535.4807999999998px;top:153.71px;font-size:10.48px;line-height:12.05px;color:#000;font-weight:normal;white-space:pre;transform:scaleX(0.9350);transform-origin:0 0;">03-Дек-21, L-2  Комплексный интегрированный график (Level 2)</div>
<div style="position:absolute;left:535.4807999999998px;top:175.71px;font-size:10.48px;line-height:12.05px;color:#000;font-weight:normal;white-space:pre;transform:scaleX(0.9350);transform-origin:0 0;">03-Дек-21, L-2.PM  Управление проектом</div>
<div style="position:absolute;left:96.51889999999995px;top:196.01px;font-size:10.48px;line-height:12.05px;color:#000;font-weight:normal;white-space:pre;transform:scaleX(0.9434);transform-origin:0 0;">Начало проекта (Gate 2 пройден)</div>
<div style="position:absolute;left:135.8226000000001px;top:212.01px;font-size:10.48px;line-height:12.05px;color:#000;font-weight:normal;white-space:pre;transform:scaleX(0.9565);transform-origin:0 0;">Завершение этапа Предпроектных работ</div>
<div style="position:absolute;left:196.81110000000004px;top:229.01px;font-size:10.48px;line-height:12.05px;color:#000;font-weight:normal;white-space:pre;transform:scaleX(0.9546);transform-origin:0 0;">Завершение этапа разработки ПД</div>
<div style="position:absolute;left:257.79959999999994px;top:245.01px;font-size:10.48px;line-height:12.05px;color:#000;font-weight:normal;white-space:pre;transform:scaleX(0.9500);transform-origin:0 0;">Этап Проектирование завершен (Gate 3 пройден)</div>
<div style="position:absolute;left:265.93140000000005px;top:261.01px;font-size:10.48px;line-height:12.05px;color:#000;font-weight:normal;white-space:pre;transform:scaleX(0.9537);transform-origin:0 0;">Завершение этапа Подготовка площадки</div>
<div style="position:absolute;left:275.4184999999999px;top:277.01px;font-size:10.48px;line-height:12.05px;color:#000;font-weight:normal;white-space:pre;transform:scaleX(0.9771);transform-origin:0 0;">Завершение этапа Котлован</div>
<div style="position:absolute;left:303.87980000000005px;top:293.01px;font-size:10.48px;line-height:12.05px;color:#000;font-weight:normal;white-space:pre;transform:scaleX(0.9621);transform-origin:0 0;">Завершение этапа Фундамент</div>
<div style="position:absolute;left:387.9083999999999px;top:309.01px;font-size:10.48px;line-height:12.05px;color:#000;font-weight:normal;white-space:pre;transform:scaleX(0.9602);transform-origin:0 0;">Завершение этапа Возведение строительного каркаса</div>
<div style="position:absolute;left:401.4614px;top:325.01px;font-size:10.48px;line-height:12.05px;color:#000;font-weight:normal;white-space:pre;transform:scaleX(0.9752);transform-origin:0 0;">Завершение этапа Кровля</div>
<div style="position:absolute;left:427.21209999999985px;top:341.01px;font-size:10.48px;line-height:12.05px;color:#000;font-weight:normal;white-space:pre;transform:scaleX(0.9593);transform-origin:0 0;">Завершение этапа Фасад</div>
<div style="position:absolute;left:492.26649999999984px;top:357.01px;font-size:10.48px;line-height:12.05px;color:#000;font-weight:normal;white-space:pre;transform:scaleX(0.9621);transform-origin:0 0;">Завершение этапа Внутренняя отделка</div>
<div style="position:absolute;left:511.24069999999995px;top:373.01px;font-size:10.48px;line-height:12.05px;color:#000;font-weight:normal;white-space:pre;transform:scaleX(0.9584);transform-origin:0 0;">Завершение этапа Монтажные работы</div>
<div style="position:absolute;left:534.2807999999999px;top:389.01px;font-size:10.48px;line-height:12.05px;color:#000;font-weight:normal;white-space:pre;transform:scaleX(0.9444);transform-origin:0 0;">Окончание проекта (Gate 4. Реализация проекта завершена)</div>
<div style="position:absolute;left:531.4149px;top:404.71px;font-size:10.48px;line-height:12.05px;color:#000;font-weight:normal;white-space:pre;transform:scaleX(0.9350);transform-origin:0 0;">30-Ноя-21, L-3.-EPCm  Детальный график EPCm (Level 3)</div>
<div style="position:absolute;left:531.4149px;top:425.71px;font-size:10.48px;line-height:12.05px;color:#000;font-weight:normal;white-space:pre;transform:scaleX(0.9350);transform-origin:0 0;">30-Ноя-21, L-3.-EPCm.PM  Управление проектом</div>
<div style="position:absolute;left:96.51889999999995px;top:446.01px;font-size:10.48px;line-height:12.05px;color:#000;font-weight:normal;white-space:pre;transform:scaleX(0.9434);transform-origin:0 0;">Начало проекта (Gate 2 пройден)</div>
<div style="position:absolute;left:135.8226000000001px;top:463.01px;font-size:10.48px;line-height:12.05px;color:#000;font-weight:normal;white-space:pre;transform:scaleX(0.9565);transform-origin:0 0;">Завершение этапа Предпроектных работ</div>
<div style="position:absolute;left:196.81110000000004px;top:479.01px;font-size:10.48px;line-height:12.05px;color:#000;font-weight:normal;white-space:pre;transform:scaleX(0.9546);transform-origin:0 0;">Завершение этапа разработки ПД</div>
<div style="position:absolute;left:257.79959999999994px;top:495.01px;font-size:10.48px;line-height:12.05px;color:#000;font-weight:normal;white-space:pre;transform:scaleX(0.9500);transform-origin:0 0;">Этап пректирование завершен (Gate 3 пройден)</div>
<div style="position:absolute;left:265.93140000000005px;top:511.01px;font-size:10.48px;line-height:12.05px;color:#000;font-weight:normal;white-space:pre;transform:scaleX(0.9537);transform-origin:0 0;">Завершение этапа Подготовка площадки</div>
<div style="position:absolute;left:275.4184999999999px;top:527.01px;font-size:10.48px;line-height:12.05px;color:#000;font-weight:normal;white-space:pre;transform:scaleX(0.9771);transform-origin:0 0;">Завершение этапа Котлован</div>
<div style="position:absolute;left:303.87980000000005px;top:543.01px;font-size:10.48px;line-height:12.05px;color:#000;font-weight:normal;white-space:pre;transform:scaleX(0.9621);transform-origin:0 0;">Завершение этапа Фундамент</div>
<div style="position:absolute;left:387.9083999999999px;top:559.01px;font-size:10.48px;line-height:12.05px;color:#000;font-weight:normal;white-space:pre;transform:scaleX(0.9602);transform-origin:0 0;">Завершение этапа Возведение строительного каркаса</div>
<div style="position:absolute;left:401.4614px;top:575.01px;font-size:10.48px;line-height:12.05px;color:#000;font-weight:normal;white-space:pre;transform:scaleX(0.9752);transform-origin:0 0;">Завершение этапа Кровля</div>
<div style="position:absolute;left:423.1462px;top:591.01px;font-size:10.48px;line-height:12.05px;color:#000;font-weight:normal;white-space:pre;transform:scaleX(0.9593);transform-origin:0 0;">Завершение этапа Фасад</div>
<div style="position:absolute;left:488.2006px;top:608.01px;font-size:10.48px;line-height:12.05px;color:#000;font-weight:normal;white-space:pre;transform:scaleX(0.9621);transform-origin:0 0;">Завершение этапа Внутренняя отделка</div>
<div style="position:absolute;left:507.1747999999999px;top:624.01px;font-size:10.48px;line-height:12.05px;color:#000;font-weight:normal;white-space:pre;transform:scaleX(0.9584);transform-origin:0 0;">Завершение этапа Монтажные работы</div>
<div style="position:absolute;left:530.2149000000001px;top:640.01px;font-size:10.48px;line-height:12.05px;color:#000;font-weight:normal;white-space:pre;transform:scaleX(0.9444);transform-origin:0 0;">Окончание проекта (Gate 4. Реализация проекта завершена)</div>
</div>
<div style="position:absolute;left:514px;top:700px;width:704px;height:16px;background:#0A76D8"></div>
<div style="position:absolute;left:526px;top:700px;width:1px;height:16px;background:#5C9FE0"></div>
<div style="position:absolute;left:539px;top:700px;width:1px;height:16px;background:#5C9FE0"></div>
<div style="position:absolute;left:656px;top:700px;width:1px;height:16px;background:#5C9FE0"></div>
<div style="position:absolute;left:950px;top:700px;width:1px;height:16px;background:#5C9FE0"></div>
<div style="position:absolute;left:1004px;top:700px;width:1px;height:16px;background:#5C9FE0"></div>
<div style="position:absolute;left:1066px;top:700px;width:1px;height:16px;background:#5C9FE0"></div>
<div style="position:absolute;left:1128px;top:700px;width:1px;height:16px;background:#5C9FE0"></div>
<div style="position:absolute;left:564px;top:700px;width:92px;height:16px;border:2px solid #F89A3C"></div>
<div style="position:absolute;left:567px;top:701.56px;font-size:10.43px;line-height:11.99px;color:#fff;font-weight:normal;white-space:pre;transform:scaleX(0.9350);transform-origin:0 0;letter-spacing:-0.35px">PM.1120</div>
<div style="position:absolute;left:660px;top:701.56px;font-size:10.43px;line-height:11.99px;color:#fff;font-weight:normal;white-space:pre;transform:scaleX(0.9444);transform-origin:0 0;">Окончание проекта (Gate 4. Реализация проекта завершена)</div>
<div style="position:absolute;right:815px;top:701.56px;font-size:10.43px;line-height:11.99px;color:#fff;font-weight:normal;white-space:pre;transform:scaleX(0.9350);transform-origin:100% 0;">0</div>
<div style="position:absolute;left:1069.5px;top:701.56px;font-size:10.43px;line-height:11.99px;color:#fff;font-weight:normal;white-space:pre;transform:scaleX(0.9350);transform-origin:0 0;">30-Ноя-21*</div>
<div style="position:absolute;right:604.5px;top:701.56px;font-size:10.43px;line-height:11.99px;color:#fff;font-weight:normal;white-space:pre;transform:scaleX(0.9350);transform-origin:100% 0;">0.00</div>
<div style="position:absolute;left:5px;top:90px;width:326px;height:95px;border:5px solid #FF0000"></div>
<div style="position:absolute;left:20.7px;top:97.30px;font-size:29.5px;line-height:34px;color:#17375E;white-space:pre">1.</div>
<div style="position:absolute;left:77px;top:97.30px;font-size:29.5px;line-height:34px;color:#17375E;white-space:pre">Уровень</div>
<div style="position:absolute;left:22px;top:132.80px;font-size:29.5px;line-height:34px;color:#17375E;white-space:pre">Директивный график</div>
<div style="position:absolute;left:5px;top:217px;width:326px;height:169px;border:5px solid #FF0000"></div>
<div style="position:absolute;left:21px;top:225.30px;font-size:29.5px;line-height:34px;color:#17375E;white-space:pre">2.</div>
<div style="position:absolute;left:76px;top:225.30px;font-size:29.5px;line-height:34px;color:#17375E;white-space:pre">Уровень</div>
<div style="position:absolute;left:19.8px;top:259.31px;font-size:30.6px;line-height:34px;color:#17375E;white-space:pre">Комплексный</div>
<div style="position:absolute;left:20.2px;top:294.08px;font-size:30.3px;line-height:34px;color:#17375E;white-space:pre">интегрированный</div>
<div style="position:absolute;left:21px;top:329.30px;font-size:29.5px;line-height:34px;color:#17375E;white-space:pre">график</div>
<div style="position:absolute;left:5px;top:493px;width:326px;height:113px;border:5px solid #FF0000"></div>
<div style="position:absolute;left:21px;top:501.80px;font-size:29.5px;line-height:34px;color:#17375E;white-space:pre">3.</div>
<div style="position:absolute;left:77px;top:501.80px;font-size:29.5px;line-height:34px;color:#17375E;white-space:pre">Уровень</div>
<div style="position:absolute;left:21.5px;top:537.66px;font-size:29.1px;line-height:34px;color:#17375E;white-space:pre">Детальный график</div>
<svg style="position:absolute;left:0;top:0" width="1816" height="729"><line x1="331" y1="138" x2="459.60" y2="153.96" stroke="#FF0000" stroke-width="5"/><path d="M472 155.5 L458.76 160.71 L460.43 147.21 Z" fill="#FF0000"/><line x1="330" y1="299" x2="459.86" y2="349.94" stroke="#FF0000" stroke-width="5"/><path d="M471.5 354.5 L457.38 356.27 L462.35 343.61 Z" fill="#FF0000"/><line x1="330" y1="551" x2="460.00" y2="588.81" stroke="#FF0000" stroke-width="5"/><path d="M472 592.3 L458.10 595.34 L461.90 582.28 Z" fill="#FF0000"/></svg>
<div style="position:absolute;left:471px;top:90px;width:1337px;height:132px;border:5px solid #FF0000"></div>
<div style="position:absolute;left:471px;top:254px;width:1337px;height:203px;border:5px solid #FF0000"></div>
<div style="position:absolute;left:471px;top:461px;width:1337px;height:262px;border:5px solid #FF0000"></div>
</body></html>
